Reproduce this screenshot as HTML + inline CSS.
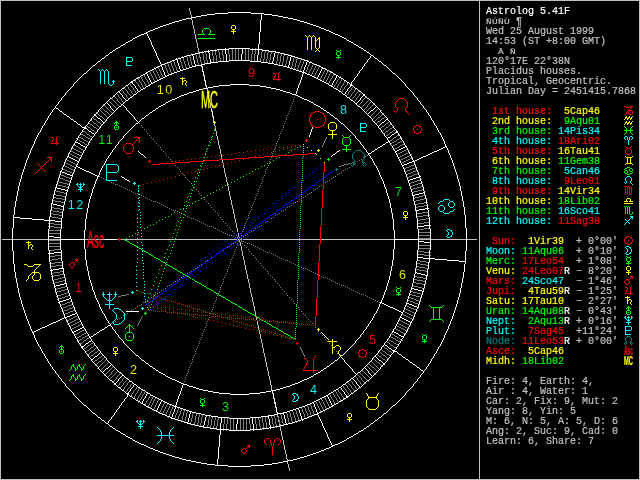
<!DOCTYPE html>
<html><head><meta charset="utf-8"><title>Astrolog 5.41F</title>
<style>
html,body{margin:0;padding:0;background:#000;width:640px;height:480px;overflow:hidden}
svg{display:block;will-change:transform}
.w text{font-family:"Liberation Sans",sans-serif}
.s text{font-family:"Liberation Mono",monospace;font-size:10px;stroke-width:0.2px;paint-order:stroke}
</style></head><body>
<svg width="640" height="480" viewBox="0 0 640 480">
<rect x="0" y="0" width="640" height="480" fill="#000"/>
<rect x="0.5" y="0.5" width="639" height="479" fill="none" stroke="#c0c0c0"/>
<line x1="479.5" y1="0" x2="479.5" y2="480" stroke="#c0c0c0"/>
<g class="w" fill="none" stroke-width="1" stroke-linecap="square">
<path d="M2 239.5h475" stroke="#c0c0c0" stroke-linecap="butt" shape-rendering="crispEdges"/>
<path d="M189.5 8v3M190.5 11v4M191.5 15v5M192.5 20v5M193.5 25v4M194.5 29v5M195.5 34v5M196.5 39v4M197.5 43v5M198.5 48v4M199.5 52v5M200.5 57v5M201.5 62v4M202.5 66v5M203.5 71v4M204.5 75v5M205.5 80v5M206.5 85v4M207.5 89v5M208.5 94v5M209.5 99v4M210.5 103v5M211.5 108v4M212.5 112v5M213.5 117v5M214.5 122v4M215.5 126v5M216.5 131v5M217.5 136v4M218.5 140v5M219.5 145v4M220.5 149v5M221.5 154v5M222.5 159v4M223.5 163v5M224.5 168v5M225.5 173v4M226.5 177v5M227.5 182v4M228.5 186v5M229.5 191v5M230.5 196v4M231.5 200v5M232.5 205v4M233.5 209v5M234.5 214v5M235.5 219v4M236.5 223v5M237.5 228v5M238.5 233v4M239.5 237v5M240.5 242v4M241.5 246v5M242.5 251v5M243.5 256v4M244.5 260v5M245.5 265v5M246.5 270v4M247.5 274v5M248.5 279v4M249.5 283v5M250.5 288v5M251.5 293v4M252.5 297v5M253.5 302v4M254.5 306v5M255.5 311v5M256.5 316v4M257.5 320v5M258.5 325v5M259.5 330v4M260.5 334v5M261.5 339v4M262.5 343v5M263.5 348v5M264.5 353v4M265.5 357v5M266.5 362v5M267.5 367v4M268.5 371v5M269.5 376v4M270.5 380v5M271.5 385v5M272.5 390v4M273.5 394v5M274.5 399v5M275.5 404v4M276.5 408v5M277.5 413v4M278.5 417v5M279.5 422v5M280.5 427v4M281.5 431v5M282.5 436v4M283.5 440v5M284.5 445v5M285.5 450v4M286.5 454v5M287.5 459v5M288.5 464v4M289.5 468v3" stroke="#c0c0c0" stroke-linecap="butt" shape-rendering="crispEdges"/>
<path d="M105 111.5h2M100 116.5h2M378 117.5h2M382 118.5h2M94 119.5h2M378 121.5h2M98 122.5h2M94 123.5h2M386 123.5h2M90 124.5h2M382 126.5h2M88 127.5h2M94 127.5h2M386 127.5h2M390 128.5h2M92 130.5h2M393 130.5h2M83 131.5h2M386 131.5h2M390 132.5h2M81 134.5h2M87 134.5h2M83 135.5h2M386 135.5h2M397 135.5h2M90 136.5h2M79 137.5h2M86 137.5h2M394 137.5h2M81 138.5h2M88 138.5h2M399 138.5h2M77 139.5h2M397 139.5h2M84 140.5h2M390 140.5h2M80 141.5h2M86 141.5h2M394 141.5h2M400 141.5h2M82 142.5h2M392 142.5h2M398 142.5h2M85 144.5h2M395 144.5h2M402 144.5h2M74 145.5h2M393 145.5h2M400 145.5h2M76 146.5h2M397 147.5h2M72 148.5h2M79 148.5h2M395 148.5h2M74 149.5h2M81 149.5h2M406 149.5h2M76 150.5h2M404 150.5h2M71 151.5h2M78 151.5h2M402 151.5h2M73 152.5h2M80 152.5h2M400 152.5h2M408 152.5h2M68 153.5h2M75 153.5h2M398 153.5h2M406 153.5h2M70 154.5h2M77 154.5h2M404 154.5h2M72 155.5h2M79 155.5h2M402 155.5h2M409 155.5h2M74 156.5h2M400 156.5h2M407 156.5h2M76 157.5h2M398 157.5h2M405 157.5h2M78 158.5h2M403 158.5h2M410 158.5h2M65 159.5h2M401 159.5h2M408 159.5h2M67 160.5h2M406 160.5h2M69 161.5h2M404 161.5h2M64 162.5h2M71 162.5h2M402 162.5h2M66 163.5h2M73 163.5h2M68 164.5h2M75 164.5h2M414 164.5h2M63 165.5h2M70 165.5h2M411 165.5h3M65 166.5h2M72 166.5h2M409 166.5h2M67 167.5h2M74 167.5h2M406 167.5h3M415 167.5h2M61 168.5h2M69 168.5h2M404 168.5h2M412 168.5h3M63 169.5h2M71 169.5h2M410 169.5h2M65 170.5h2M73 170.5h2M407 170.5h3M416 170.5h2M67 171.5h3M405 171.5h2M413 171.5h3M70 172.5h2M411 172.5h2M72 173.5h2M408 173.5h3M417 173.5h2M59 174.5h2M406 174.5h2M414 174.5h3M61 175.5h3M412 175.5h2M64 176.5h2M409 176.5h3M58 177.5h2M66 177.5h3M407 177.5h2M60 178.5h3M69 178.5h2M63 179.5h2M420 179.5h2M65 180.5h3M417 180.5h3M57 181.5h2M68 181.5h2M414 181.5h3M59 182.5h4M411 182.5h3M421 182.5h2M63 183.5h4M409 183.5h2M418 183.5h3M56 184.5h2M67 184.5h2M415 184.5h3M58 185.5h4M412 185.5h3M62 186.5h4M410 186.5h2M421 186.5h3M66 187.5h2M417 187.5h4M413 188.5h4M411 189.5h2M422 189.5h2M54 190.5h2M418 190.5h4M56 191.5h4M414 191.5h4M60 192.5h4M412 192.5h2M64 193.5h3M53 194.5h3M56 195.5h6M423 195.5h3M62 196.5h4M419 196.5h4M53 197.5h3M415 197.5h4M56 198.5h6M413 198.5h2M424 198.5h3M62 199.5h3M420 199.5h4M52 200.5h3M416 200.5h4M55 201.5h6M414 201.5h2M61 202.5h4M424 202.5h4M418 203.5h6M415 204.5h3M424 205.5h4M418 206.5h6M51 207.5h3M415 207.5h3M54 208.5h6M60 209.5h3M50 210.5h3M53 211.5h6M59 212.5h4M422 212.5h7M50 213.5h3M416 213.5h6M53 214.5h6M59 215.5h3M423 215.5h7M49 216.5h3M417 216.5h6M52 217.5h6M58 218.5h4M426 218.5h4M420 219.5h6M417 220.5h3M424 222.5h6M48 223.5h6M418 223.5h6M54 224.5h7M48 226.5h6M54 227.5h7M424 228.5h7M418 229.5h6M48 230.5h13M418 232.5h13M48 233.5h13M418 235.5h13M418 238.5h13M48 240.5h13M48 243.5h13M418 245.5h13M48 246.5h13M418 248.5h13M54 249.5h7M48 250.5h6M418 251.5h6M424 252.5h7M418 254.5h6M55 255.5h6M424 255.5h7M49 256.5h6M58 258.5h4M52 259.5h6M49 260.5h3M417 260.5h3M420 261.5h6M55 262.5h7M426 262.5h4M49 263.5h6M417 263.5h3M420 264.5h6M56 265.5h7M426 265.5h3M50 266.5h6M416 266.5h3M419 267.5h6M425 268.5h4M416 269.5h3M419 270.5h6M60 271.5h4M425 271.5h3M54 272.5h6M51 273.5h3M60 274.5h4M54 275.5h6M51 276.5h3M414 276.5h3M62 277.5h3M417 277.5h6M58 278.5h4M423 278.5h4M54 279.5h4M414 279.5h3M52 280.5h2M63 280.5h3M417 280.5h6M59 281.5h4M423 281.5h3M55 282.5h4M413 282.5h3M53 283.5h2M416 283.5h6M422 284.5h4M412 285.5h2M65 286.5h2M414 286.5h4M61 287.5h4M418 287.5h4M57 288.5h4M422 288.5h3M55 289.5h2M65 289.5h3M61 290.5h4M57 291.5h4M411 291.5h2M55 292.5h2M67 292.5h2M413 292.5h4M64 293.5h3M417 293.5h4M61 294.5h3M410 294.5h2M421 294.5h2M58 295.5h3M68 295.5h2M412 295.5h4M56 296.5h2M65 296.5h3M416 296.5h4M62 297.5h3M409 297.5h2M420 297.5h2M59 298.5h3M411 298.5h3M57 299.5h2M414 299.5h2M408 300.5h2M416 300.5h3M70 301.5h2M410 301.5h3M419 301.5h2M67 302.5h3M413 302.5h2M65 303.5h2M415 303.5h3M62 304.5h3M71 304.5h2M418 304.5h2M60 305.5h2M68 305.5h3M405 305.5h2M66 306.5h2M407 306.5h2M63 307.5h3M72 307.5h2M409 307.5h2M61 308.5h2M69 308.5h3M404 308.5h2M411 308.5h3M67 309.5h2M406 309.5h2M414 309.5h2M64 310.5h3M73 310.5h2M408 310.5h2M416 310.5h2M62 311.5h2M70 311.5h3M403 311.5h2M410 311.5h2M68 312.5h2M405 312.5h2M412 312.5h2M65 313.5h3M407 313.5h2M414 313.5h2M63 314.5h2M402 314.5h2M409 314.5h2M404 315.5h2M411 315.5h2M75 316.5h2M406 316.5h2M413 316.5h2M73 317.5h2M408 317.5h2M71 318.5h2M410 318.5h2M69 319.5h2M76 319.5h2M412 319.5h2M67 320.5h2M74 320.5h2M399 320.5h2M72 321.5h2M79 321.5h2M401 321.5h2M70 322.5h2M77 322.5h2M403 322.5h2M68 323.5h2M75 323.5h2M405 323.5h2M73 324.5h2M80 324.5h2M399 324.5h2M407 324.5h2M71 325.5h2M78 325.5h2M401 325.5h2M409 325.5h2M69 326.5h2M76 326.5h2M397 326.5h2M403 326.5h2M74 327.5h2M399 327.5h2M405 327.5h2M72 328.5h2M401 328.5h2M407 328.5h2M396 329.5h2M403 329.5h2M82 330.5h2M398 330.5h2M405 330.5h2M80 331.5h2M401 332.5h2M77 333.5h2M84 333.5h2M403 333.5h2M75 334.5h2M82 334.5h2M392 334.5h2M79 336.5h2M85 336.5h2M395 336.5h2M77 337.5h2M83 337.5h2M391 337.5h2M397 337.5h2M87 338.5h2M393 338.5h2M80 339.5h2M400 339.5h2M78 340.5h2M84 340.5h2M389 340.5h2M396 340.5h2M391 341.5h2M398 341.5h2M387 342.5h2M80 343.5h2M91 343.5h2M394 343.5h2M396 344.5h2M88 345.5h2M391 345.5h2M91 347.5h2M394 347.5h2M84 348.5h2M385 348.5h2M87 350.5h2M91 351.5h2M383 351.5h2M389 351.5h2M95 352.5h2M387 354.5h2M91 355.5h2M383 355.5h2M379 356.5h2M99 357.5h2M383 359.5h2M95 360.5h2M99 361.5h2M377 362.5h2M372 367.5h2M66.5 321v1M67.5 324v1M70.5 150v1M71.5 147v1M71.5 329v1M73.5 144v1M74.5 335v1M76.5 138v1M76.5 338v1M77.5 315v1M77.5 341v1M78.5 136v1M78.5 147v1M78.5 318v1M79.5 140v1M79.5 332v1M79.5 344v1M80.5 133v1M81.5 335v1M82.5 130v1M82.5 153v1M82.5 338v1M82.5 342v1M83.5 139v1M83.5 150v1M83.5 341v1M83.5 349v1M84.5 143v1M84.5 329v1M85.5 132v1M85.5 136v1M85.5 352v1M86.5 125v1M86.5 133v1M86.5 332v1M86.5 339v1M86.5 347v1M86.5 351v1M87.5 126v1M87.5 145v1M87.5 335v1M87.5 346v1M87.5 355v1M88.5 122v1M88.5 142v1M88.5 354v1M89.5 123v1M89.5 135v1M89.5 337v1M89.5 349v1M89.5 353v1M89.5 357v1M90.5 119v1M90.5 128v1M90.5 139v1M90.5 344v1M90.5 348v1M90.5 352v1M90.5 356v1M91.5 120v1M91.5 129v1M92.5 117v1M92.5 121v1M92.5 125v1M92.5 137v1M93.5 118v1M93.5 122v1M93.5 126v1M93.5 342v1M93.5 346v1M93.5 350v1M93.5 354v1M93.5 362v1M94.5 131v1M94.5 345v1M94.5 349v1M94.5 353v1M94.5 361v1M95.5 132v1M95.5 348v1M95.5 365v1M96.5 112v1M96.5 120v1M96.5 124v1M96.5 128v1M96.5 347v1M96.5 364v1M97.5 113v1M97.5 121v1M97.5 125v1M97.5 129v1M97.5 351v1M97.5 359v1M97.5 363v1M97.5 368v1M98.5 114v1M98.5 126v1M98.5 350v1M98.5 358v1M98.5 362v1M98.5 367v1M99.5 109v1M99.5 115v1M99.5 127v1M99.5 366v1M100.5 110v1M100.5 123v1M100.5 365v1M100.5 370v1M101.5 107v1M101.5 111v1M101.5 124v1M101.5 356v1M101.5 360v1M101.5 364v1M101.5 369v1M102.5 108v1M102.5 112v1M102.5 117v1M102.5 355v1M102.5 359v1M102.5 363v1M102.5 368v1M103.5 104v1M103.5 109v1M103.5 113v1M103.5 118v1M103.5 358v1M103.5 362v1M103.5 367v1M104.5 105v1M104.5 110v1M104.5 114v1M104.5 119v1M104.5 357v1M104.5 361v1M104.5 366v1M104.5 375v1M105.5 106v1M105.5 115v1M105.5 120v1M105.5 360v1M105.5 365v1M105.5 374v1M106.5 107v1M106.5 116v1M106.5 359v1M106.5 364v1M106.5 373v1M107.5 108v1M107.5 112v1M107.5 117v1M107.5 363v1M107.5 372v1M107.5 377v1M108.5 100v1M108.5 109v1M108.5 113v1M108.5 362v1M108.5 371v1M108.5 376v1M109.5 101v1M109.5 110v1M109.5 114v1M109.5 370v1M109.5 375v1M109.5 379v1M110.5 97v1M110.5 102v1M110.5 111v1M110.5 115v1M110.5 369v1M110.5 374v1M110.5 378v1M111.5 98v1M111.5 103v1M111.5 112v1M111.5 368v1M111.5 372v2M111.5 377v1M112.5 99v1M112.5 104v1M112.5 113v1M112.5 367v1M112.5 371v1M112.5 376v1M112.5 382v1M113.5 95v1M113.5 100v1M113.5 105v1M113.5 366v1M113.5 370v1M113.5 375v1M113.5 381v1M114.5 96v1M114.5 101v1M114.5 106v1M114.5 369v1M114.5 374v1M114.5 380v1M115.5 97v1M115.5 102v1M115.5 107v1M115.5 368v1M115.5 373v1M115.5 379v1M116.5 93v1M116.5 98v1M116.5 103v1M116.5 108v1M116.5 372v1M116.5 377v2M117.5 94v1M117.5 99v2M117.5 104v1M117.5 371v1M117.5 376v1M117.5 386v1M118.5 95v2M118.5 101v1M118.5 105v1M118.5 375v1M118.5 385v1M119.5 97v1M119.5 102v1M119.5 106v1M119.5 374v1M119.5 383v2M119.5 388v1M120.5 98v1M120.5 103v1M120.5 373v1M120.5 382v1M120.5 387v1M121.5 89v1M121.5 99v2M121.5 104v1M121.5 381v1M121.5 386v1M122.5 90v1M122.5 101v1M122.5 379v2M122.5 385v1M122.5 390v1M123.5 87v1M123.5 91v2M123.5 102v1M123.5 378v1M123.5 383v2M123.5 389v1M124.5 88v1M124.5 93v1M124.5 377v1M124.5 382v1M124.5 387v2M125.5 89v1M125.5 94v1M125.5 381v1M125.5 386v1M125.5 392v1M126.5 85v1M126.5 90v1M126.5 95v2M126.5 380v1M126.5 385v1M126.5 391v1M127.5 86v1M127.5 91v2M127.5 97v1M127.5 379v1M127.5 383v2M127.5 389v2M128.5 87v2M128.5 93v1M128.5 98v1M128.5 382v1M128.5 388v1M129.5 83v1M129.5 89v1M129.5 94v1M129.5 381v1M129.5 387v1M130.5 84v2M130.5 90v1M130.5 95v1M130.5 385v2M130.5 396v1M131.5 86v1M131.5 91v2M131.5 96v1M131.5 384v1M131.5 394v2M132.5 87v1M132.5 93v1M132.5 383v1M132.5 393v1M133.5 88v2M133.5 94v1M133.5 391v2M133.5 398v1M134.5 79v1M134.5 90v1M134.5 390v1M134.5 396v2M135.5 80v2M135.5 91v2M135.5 389v1M135.5 394v2M136.5 82v1M136.5 93v1M136.5 387v2M136.5 393v1M136.5 400v1M137.5 77v1M137.5 83v1M137.5 386v1M137.5 391v2M137.5 398v2M138.5 78v2M138.5 84v2M138.5 389v2M138.5 396v2M138.5 402v1M139.5 80v2M139.5 86v1M139.5 388v1M139.5 395v1M139.5 400v2M140.5 76v1M140.5 82v1M140.5 87v2M140.5 393v2M140.5 399v1M141.5 77v2M141.5 83v2M141.5 89v1M141.5 391v2M141.5 397v2M142.5 79v2M142.5 85v2M142.5 390v1M142.5 395v2M143.5 74v1M143.5 81v1M143.5 87v1M143.5 394v1M144.5 75v2M144.5 82v2M144.5 392v2M144.5 405v1M145.5 77v2M145.5 84v2M145.5 391v1M145.5 403v2M146.5 79v1M146.5 86v1M146.5 401v2M147.5 80v2M147.5 400v1M147.5 407v1M148.5 82v2M148.5 398v2M148.5 405v2M149.5 71v1M149.5 84v1M149.5 396v2M149.5 403v2M150.5 72v2M150.5 395v1M150.5 401v2M150.5 407v2M151.5 74v2M151.5 399v2M151.5 405v2M152.5 69v2M152.5 76v2M152.5 397v2M152.5 403v2M153.5 71v2M153.5 78v2M153.5 396v1M153.5 401v2M153.5 409v2M154.5 67v1M154.5 73v2M154.5 80v2M154.5 399v2M154.5 407v2M155.5 68v2M155.5 75v2M155.5 398v1M155.5 405v2M156.5 70v2M156.5 77v2M156.5 403v2M157.5 66v1M157.5 72v2M157.5 79v2M157.5 401v2M158.5 67v2M158.5 74v2M158.5 399v2M159.5 69v2M159.5 76v2M159.5 412v2M160.5 71v2M160.5 78v1M160.5 410v2M161.5 73v2M161.5 408v2M162.5 75v2M162.5 406v2M162.5 413v2M163.5 77v1M163.5 404v2M163.5 411v2M164.5 63v2M164.5 402v2M164.5 409v2M165.5 65v3M165.5 407v2M165.5 414v2M166.5 68v2M166.5 405v2M166.5 412v2M167.5 62v2M167.5 70v3M167.5 403v2M167.5 410v2M168.5 64v3M168.5 73v2M168.5 408v2M168.5 416v2M169.5 67v2M169.5 406v2M169.5 414v2M170.5 61v2M170.5 69v3M170.5 404v2M170.5 411v3M171.5 63v3M171.5 72v2M171.5 409v2M172.5 66v2M172.5 407v2M173.5 60v2M173.5 68v3M173.5 405v2M174.5 62v3M174.5 71v2M174.5 418v2M175.5 65v2M175.5 415v3M176.5 67v3M176.5 413v2M177.5 70v2M177.5 410v3M177.5 419v2M178.5 408v2M178.5 416v3M179.5 57v2M179.5 414v2M180.5 59v3M180.5 411v3M181.5 62v3M181.5 409v2M181.5 420v2M182.5 56v2M182.5 65v3M182.5 416v4M183.5 58v3M183.5 68v2M183.5 412v4M184.5 61v3M184.5 410v2M184.5 421v2M185.5 64v3M185.5 417v4M186.5 55v2M186.5 67v2M186.5 413v4M187.5 57v4M187.5 411v2M188.5 61v4M189.5 55v2M189.5 65v3M190.5 57v4M190.5 422v3M191.5 61v4M191.5 418v4M192.5 65v2M192.5 414v4M193.5 412v2M194.5 422v4M195.5 53v2M195.5 416v6M196.5 55v4M196.5 413v3M197.5 59v4M197.5 423v3M198.5 52v2M198.5 63v3M198.5 417v6M199.5 54v4M199.5 414v3M200.5 58v4M200.5 423v4M201.5 62v3M201.5 417v6M202.5 51v3M202.5 414v3M203.5 54v6M204.5 60v4M205.5 51v3M206.5 54v6M207.5 60v4M207.5 425v3M208.5 419v6M209.5 416v3M210.5 425v4M211.5 419v6M212.5 50v6M212.5 416v3M213.5 56v7M213.5 426v3M214.5 420v6M215.5 49v6M215.5 417v3M216.5 55v7M216.5 426v4M217.5 420v6M218.5 49v3M218.5 417v3M219.5 52v6M220.5 58v4M222.5 49v6M223.5 55v6M223.5 424v7M224.5 418v6M226.5 424v7M227.5 418v6M228.5 48v6M229.5 54v7M230.5 418v13M232.5 48v13M233.5 418v13M235.5 48v13M238.5 48v13M240.5 418v13M243.5 418v13M245.5 48v13M246.5 418v13M248.5 48v13M249.5 418v6M250.5 424v7M251.5 54v7M252.5 48v6M254.5 54v7M255.5 48v6M255.5 418v6M256.5 424v6M258.5 417v3M259.5 420v6M260.5 58v4M260.5 426v4M261.5 52v6M262.5 49v3M262.5 417v6M263.5 59v3M263.5 423v7M264.5 53v6M265.5 50v3M265.5 416v6M266.5 59v4M266.5 422v7M267.5 53v6M268.5 50v3M269.5 60v3M270.5 54v6M271.5 51v3M271.5 415v3M272.5 418v6M273.5 424v4M274.5 415v3M275.5 418v6M276.5 61v4M276.5 424v4M277.5 55v6M277.5 414v2M278.5 52v3M278.5 416v4M279.5 62v3M279.5 420v4M280.5 56v6M280.5 413v2M280.5 424v3M281.5 53v3M281.5 415v4M282.5 62v4M282.5 419v4M283.5 56v6M283.5 423v3M284.5 53v3M285.5 64v3M286.5 60v4M286.5 412v2M287.5 56v4M287.5 414v4M288.5 54v2M288.5 418v4M289.5 411v2M289.5 422v2M290.5 413v4M291.5 66v2M291.5 417v4M292.5 62v4M292.5 410v2M292.5 421v3M293.5 58v4M293.5 412v3M294.5 56v2M294.5 67v2M294.5 415v3M295.5 63v4M295.5 409v2M295.5 418v3M296.5 59v4M296.5 411v3M296.5 421v2M297.5 57v2M297.5 68v2M297.5 414v3M298.5 65v3M298.5 417v3M299.5 63v2M299.5 420v2M300.5 60v3M300.5 69v2M301.5 58v2M301.5 66v3M301.5 407v2M302.5 64v2M302.5 409v3M303.5 61v3M303.5 412v2M304.5 59v2M304.5 406v2M304.5 414v3M305.5 72v2M305.5 408v3M305.5 417v2M306.5 70v2M306.5 411v2M307.5 67v3M307.5 405v2M307.5 413v3M308.5 65v2M308.5 73v2M308.5 407v3M308.5 416v2M309.5 63v2M309.5 71v2M309.5 410v2M310.5 61v2M310.5 69v2M310.5 404v2M310.5 412v3M311.5 67v2M311.5 74v2M311.5 406v3M311.5 415v2M312.5 65v2M312.5 72v2M312.5 409v2M313.5 63v2M313.5 70v2M313.5 411v3M314.5 68v2M314.5 75v2M314.5 414v2M315.5 66v2M315.5 73v2M315.5 401v1M316.5 64v2M316.5 71v2M316.5 402v2M317.5 69v2M317.5 404v2M318.5 67v2M318.5 400v1M318.5 406v2M319.5 65v2M319.5 401v2M319.5 408v2M320.5 78v2M320.5 403v2M320.5 410v2M321.5 76v2M321.5 398v2M321.5 405v2M321.5 412v1M322.5 74v2M322.5 400v2M322.5 407v2M323.5 72v2M323.5 79v2M323.5 402v2M323.5 409v2M324.5 70v2M324.5 77v2M324.5 397v1M324.5 404v2M324.5 411v1M325.5 68v2M325.5 75v2M325.5 82v1M325.5 398v2M325.5 406v2M326.5 73v2M326.5 80v2M326.5 400v2M326.5 408v2M327.5 71v2M327.5 78v2M327.5 402v2M328.5 70v1M328.5 76v2M328.5 83v1M328.5 404v2M329.5 74v2M329.5 81v2M329.5 394v1M329.5 406v2M330.5 72v2M330.5 79v2M330.5 395v2M331.5 71v1M331.5 78v1M331.5 397v2M332.5 76v2M332.5 392v1M332.5 399v1M333.5 74v2M333.5 87v1M333.5 393v2M333.5 400v2M334.5 73v1M334.5 85v2M334.5 395v2M334.5 402v2M335.5 84v1M335.5 391v1M335.5 397v1M335.5 404v1M336.5 82v2M336.5 88v1M336.5 392v2M336.5 398v2M337.5 80v2M337.5 86v2M337.5 389v1M337.5 394v2M337.5 400v2M338.5 79v1M338.5 84v2M338.5 390v2M338.5 396v1M338.5 402v1M339.5 77v2M339.5 83v1M339.5 90v1M339.5 392v1M339.5 397v2M340.5 76v1M340.5 81v2M340.5 88v2M340.5 393v1M340.5 399v2M341.5 79v2M341.5 86v2M341.5 92v1M341.5 394v2M341.5 401v1M342.5 78v1M342.5 85v1M342.5 90v2M342.5 385v1M342.5 396v1M343.5 83v2M343.5 89v1M343.5 386v2M343.5 397v2M344.5 81v2M344.5 87v2M344.5 388v1M344.5 399v1M345.5 80v1M345.5 86v1M345.5 384v1M345.5 389v1M346.5 85v1M346.5 95v1M346.5 385v1M346.5 390v2M347.5 83v2M347.5 94v1M347.5 382v1M347.5 386v2M347.5 392v1M348.5 82v1M348.5 92v2M348.5 383v1M348.5 388v1M348.5 393v2M349.5 91v1M349.5 97v1M349.5 384v1M349.5 389v1M349.5 395v1M350.5 90v1M350.5 96v1M350.5 380v1M350.5 385v1M350.5 390v2M351.5 88v2M351.5 94v2M351.5 99v1M351.5 381v1M351.5 386v2M351.5 392v1M352.5 87v1M352.5 93v1M352.5 98v1M352.5 382v2M352.5 388v1M352.5 393v1M353.5 86v1M353.5 92v1M353.5 97v1M353.5 384v1M353.5 389v1M354.5 90v2M354.5 96v1M354.5 101v1M354.5 385v1M354.5 390v1M355.5 89v1M355.5 94v2M355.5 100v1M355.5 376v1M355.5 386v2M355.5 391v1M356.5 88v1M356.5 93v1M356.5 98v2M356.5 377v1M356.5 388v1M357.5 92v1M357.5 97v1M357.5 374v1M357.5 378v2M357.5 389v1M358.5 91v1M358.5 96v1M358.5 105v1M358.5 375v1M358.5 380v1M359.5 90v1M359.5 94v2M359.5 104v1M359.5 372v1M359.5 376v1M359.5 381v1M360.5 93v1M360.5 103v1M360.5 373v1M360.5 377v1M360.5 382v2M361.5 92v1M361.5 102v1M361.5 107v1M361.5 374v1M361.5 378v2M361.5 384v1M362.5 100v2M362.5 106v1M362.5 370v1M362.5 375v1M362.5 380v1M362.5 385v1M363.5 99v1M363.5 105v1M363.5 110v1M363.5 371v1M363.5 376v1M363.5 381v1M364.5 98v1M364.5 104v1M364.5 109v1M364.5 372v1M364.5 377v1M364.5 382v1M365.5 97v1M365.5 103v1M365.5 108v1M365.5 112v1M365.5 373v1M365.5 378v1M365.5 383v1M366.5 96v1M366.5 102v1M366.5 107v1M366.5 111v1M366.5 365v1M366.5 374v1M366.5 379v1M367.5 101v1M367.5 105v2M367.5 110v1M367.5 366v1M367.5 375v1M367.5 380v1M368.5 100v1M368.5 104v1M368.5 109v1M368.5 363v1M368.5 367v1M368.5 376v1M368.5 381v1M369.5 99v1M369.5 103v1M369.5 108v1M369.5 364v1M369.5 368v1M369.5 377v1M370.5 102v1M370.5 107v1M370.5 116v1M370.5 365v1M370.5 369v1M370.5 378v1M371.5 101v1M371.5 106v1M371.5 115v1M371.5 361v1M371.5 366v1M371.5 370v1M372.5 105v1M372.5 114v1M372.5 119v1M372.5 362v1M372.5 371v1M373.5 104v1M373.5 113v1M373.5 118v1M373.5 358v1M373.5 363v1M373.5 372v1M374.5 103v1M374.5 112v1M374.5 117v1M374.5 121v1M374.5 359v1M374.5 364v1M374.5 368v1M374.5 373v1M375.5 111v1M375.5 116v1M375.5 120v1M375.5 360v1M375.5 365v1M375.5 369v1M375.5 374v1M376.5 110v1M376.5 115v1M376.5 119v1M376.5 123v1M376.5 361v1M376.5 366v1M376.5 370v1M377.5 109v1M377.5 114v1M377.5 118v1M377.5 122v1M377.5 354v1M377.5 367v1M377.5 371v1M378.5 108v1M378.5 113v1M378.5 355v1M378.5 368v1M379.5 112v1M379.5 351v1M379.5 363v1M379.5 369v1M380.5 111v1M380.5 116v1M380.5 120v1M380.5 128v1M380.5 352v1M380.5 364v1M381.5 110v1M381.5 115v1M381.5 119v1M381.5 127v1M381.5 349v1M381.5 353v1M381.5 357v1M381.5 365v1M382.5 114v1M382.5 131v1M382.5 350v1M382.5 354v1M382.5 358v1M382.5 366v1M383.5 113v1M383.5 130v1M383.5 346v1M384.5 117v1M384.5 125v1M384.5 129v1M384.5 133v1M384.5 347v1M385.5 116v1M385.5 124v1M385.5 128v1M385.5 132v1M385.5 136v1M385.5 352v1M385.5 356v1M385.5 360v1M386.5 341v1M386.5 353v1M386.5 357v1M386.5 361v1M387.5 349v1M387.5 358v1M388.5 122v1M388.5 126v1M388.5 130v1M388.5 134v1M388.5 339v1M388.5 350v1M388.5 359v1M389.5 121v1M389.5 125v1M389.5 129v1M389.5 133v1M389.5 141v1M389.5 343v1M389.5 355v1M390.5 124v1M390.5 336v1M390.5 344v1M390.5 356v1M391.5 123v1M391.5 143v1M391.5 333v1M391.5 352v1M392.5 127v1M392.5 131v1M392.5 139v1M392.5 146v1M392.5 353v1M393.5 126v1M393.5 138v1M393.5 342v1M393.5 346v1M394.5 149v1M394.5 335v1M395.5 129v1M395.5 328v1M395.5 339v1M396.5 136v1M396.5 140v1M396.5 325v1M396.5 348v1M397.5 143v1M397.5 154v1M398.5 323v1M398.5 345v1M399.5 134v1M399.5 146v1M399.5 338v1M400.5 160v1M400.5 331v1M400.5 342v1M401.5 137v1M401.5 163v1M402.5 140v1M402.5 340v1M404.5 143v1M405.5 334v1M407.5 331v1M411.5 154v1M412.5 157v1" stroke="#808080" stroke-linecap="butt" shape-rendering="crispEdges"/>
<path d="M371 110.5h2M98 118.5h2M382 122.5h2M85 128.5h2M89 131.5h2M395 132.5h2M92 133.5h2M392 134.5h2M388 137.5h2M76 142.5h2M78 143.5h2M81 145.5h2M83 146.5h2M405 146.5h2M403 147.5h2M401 148.5h2M399 149.5h2M397 150.5h2M395 151.5h2M67 156.5h2M69 157.5h2M71 158.5h2M73 159.5h2M75 160.5h2M77 161.5h2M412 161.5h2M409 162.5h3M407 163.5h2M404 164.5h3M402 165.5h2M60 171.5h2M62 172.5h3M65 173.5h2M67 174.5h3M70 175.5h2M419 176.5h2M416 177.5h3M413 178.5h3M410 179.5h3M408 180.5h2M55 187.5h2M57 188.5h4M61 189.5h4M65 190.5h2M423 192.5h2M419 193.5h4M415 194.5h4M413 195.5h2M51 203.5h2M53 204.5h4M57 205.5h4M61 206.5h3M425 208.5h4M419 209.5h6M416 210.5h3M49 220.5h6M55 221.5h7M424 225.5h7M418 226.5h6M48 236.5h6M54 237.5h7M418 241.5h6M424 242.5h7M54 252.5h7M48 253.5h6M417 257.5h6M423 258.5h7M59 268.5h4M53 269.5h6M50 270.5h3M415 272.5h2M417 273.5h4M421 274.5h4M425 275.5h3M64 283.5h2M60 284.5h4M56 285.5h4M54 286.5h2M412 288.5h2M414 289.5h4M418 290.5h4M422 291.5h2M69 298.5h2M66 299.5h3M63 300.5h3M60 301.5h3M58 302.5h2M407 303.5h2M409 304.5h3M412 305.5h2M414 306.5h3M417 307.5h2M75 313.5h2M72 314.5h3M70 315.5h2M67 316.5h3M65 317.5h2M400 317.5h2M402 318.5h2M404 319.5h2M406 320.5h2M408 321.5h2M410 322.5h2M82 327.5h2M80 328.5h2M78 329.5h2M76 330.5h2M74 331.5h2M72 332.5h2M394 332.5h2M396 333.5h2M399 335.5h2M401 336.5h2M89 341.5h2M86 343.5h2M385 345.5h2M82 346.5h2M389 348.5h2M392 350.5h2M95 356.5h2M379 360.5h2M106 368.5h2M75.5 141v1M80.5 144v1M81.5 347v1M84.5 127v1M84.5 345v1M85.5 147v1M85.5 344v1M87.5 129v1M88.5 130v1M88.5 342v1M91.5 132v1M91.5 340v1M91.5 360v1M92.5 359v1M93.5 358v1M94.5 114v1M94.5 134v1M94.5 357v1M95.5 115v1M96.5 116v1M97.5 117v1M97.5 355v1M98.5 354v1M99.5 353v1M100.5 119v1M100.5 352v1M101.5 120v1M102.5 121v1M102.5 372v1M103.5 122v1M103.5 371v1M104.5 370v1M105.5 369v1M106.5 102v1M107.5 103v1M108.5 104v1M108.5 367v1M109.5 105v1M109.5 366v1M110.5 106v2M110.5 365v1M111.5 108v1M111.5 364v1M112.5 109v1M113.5 110v1M114.5 111v1M114.5 384v1M115.5 383v1M116.5 382v1M117.5 381v1M118.5 91v1M118.5 379v2M119.5 92v1M119.5 378v1M120.5 93v1M120.5 377v1M121.5 94v1M121.5 376v1M122.5 95v2M122.5 375v1M123.5 97v1M124.5 98v1M125.5 99v1M126.5 100v1M127.5 394v1M128.5 392v2M129.5 391v1M130.5 389v2M131.5 81v1M131.5 388v1M132.5 82v2M132.5 387v1M133.5 84v1M133.5 385v2M134.5 85v1M134.5 384v1M135.5 86v2M136.5 88v1M137.5 89v2M138.5 91v1M141.5 403v1M142.5 401v2M143.5 399v2M144.5 398v1M145.5 396v2M146.5 72v2M146.5 394v2M147.5 74v2M147.5 393v1M148.5 76v2M149.5 78v2M150.5 80v2M151.5 82v2M156.5 410v2M157.5 408v2M158.5 406v2M159.5 404v2M160.5 402v2M161.5 65v2M161.5 400v2M162.5 67v3M163.5 70v2M164.5 72v3M165.5 75v2M171.5 417v2M172.5 414v3M173.5 412v2M174.5 409v3M175.5 407v2M176.5 58v2M177.5 60v3M178.5 63v3M179.5 66v3M180.5 69v2M187.5 422v2M188.5 418v4M189.5 414v4M190.5 412v2M192.5 54v2M193.5 56v4M194.5 60v4M195.5 64v2M203.5 425v3M204.5 421v4M205.5 417v4M206.5 415v2M208.5 50v3M209.5 53v6M210.5 59v4M220.5 423v7M221.5 417v6M225.5 48v6M226.5 54v7M236.5 424v7M237.5 418v6M241.5 54v7M242.5 48v6M252.5 418v6M253.5 424v7M257.5 55v7M258.5 49v6M268.5 416v3M269.5 419v6M270.5 425v4M272.5 61v3M273.5 57v4M274.5 53v4M275.5 51v2M283.5 413v2M284.5 415v4M285.5 419v4M286.5 423v2M288.5 65v2M289.5 61v4M290.5 57v4M291.5 55v2M298.5 408v2M299.5 410v3M300.5 413v3M301.5 416v3M302.5 419v2M303.5 70v2M304.5 67v3M305.5 65v2M306.5 62v3M307.5 60v2M313.5 402v2M314.5 404v3M315.5 407v2M316.5 409v3M317.5 77v2M317.5 412v2M318.5 75v2M319.5 73v2M320.5 71v2M321.5 69v2M322.5 67v2M327.5 395v2M328.5 397v2M329.5 399v2M330.5 401v2M331.5 85v1M331.5 403v2M332.5 83v2M332.5 405v2M333.5 81v2M334.5 80v1M335.5 78v2M336.5 76v2M337.5 75v1M340.5 387v1M341.5 388v2M342.5 390v1M343.5 391v1M344.5 94v1M344.5 392v2M345.5 92v2M345.5 394v1M346.5 91v1M346.5 395v2M347.5 89v2M347.5 397v1M348.5 88v1M349.5 87v1M350.5 85v2M351.5 84v1M352.5 378v1M353.5 379v1M354.5 380v1M355.5 381v1M356.5 103v1M356.5 382v2M357.5 102v1M357.5 384v1M358.5 101v1M358.5 385v1M359.5 100v1M359.5 386v1M360.5 98v2M360.5 387v1M361.5 97v1M362.5 96v1M363.5 95v1M364.5 94v1M364.5 367v1M365.5 368v1M366.5 369v1M367.5 114v1M367.5 370v1M368.5 113v1M368.5 371v2M369.5 112v1M369.5 373v1M370.5 111v1M370.5 374v1M371.5 375v1M372.5 376v1M373.5 109v1M374.5 108v1M375.5 107v1M375.5 356v1M376.5 106v1M376.5 357v1M377.5 358v1M378.5 126v1M378.5 359v1M379.5 125v1M380.5 124v1M381.5 123v1M381.5 361v1M382.5 362v1M383.5 363v1M384.5 121v1M384.5 344v1M384.5 364v1M385.5 120v1M386.5 119v1M387.5 118v1M387.5 138v1M387.5 346v1M388.5 347v1M390.5 136v1M391.5 135v1M391.5 349v1M393.5 331v1M394.5 133v1M394.5 351v1M397.5 131v1M398.5 334v1M403.5 337v1" stroke="#ffffff" stroke-linecap="butt" shape-rendering="crispEdges"/>
<path d="M228 12.5h23M215 13.5h13M251 13.5h13M207 14.5h8M264 14.5h8M201 15.5h6M272 15.5h6M196 16.5h5M278 16.5h5M191 17.5h5M283 17.5h5M186 18.5h5M288 18.5h5M182 19.5h4M293 19.5h4M179 20.5h3M297 20.5h3M175 21.5h4M300 21.5h4M172 22.5h3M304 22.5h3M169 23.5h3M307 23.5h3M166 24.5h3M310 24.5h3M163 25.5h3M313 25.5h3M160 26.5h3M316 26.5h3M158 27.5h2M319 27.5h2M155 28.5h3M321 28.5h3M153 29.5h2M324 29.5h2M150 30.5h3M326 30.5h3M148 31.5h2M329 31.5h2M146 32.5h2M331 32.5h2M144 33.5h2M333 33.5h2M141 34.5h3M335 34.5h3M139 35.5h2M338 35.5h2M137 36.5h2M340 36.5h2M135 37.5h2M342 37.5h2M133 38.5h2M344 38.5h2M130 40.5h2M347 40.5h2M128 41.5h2M349 41.5h2M126 42.5h2M351 42.5h2M123 44.5h2M354 44.5h2M121 45.5h2M356 45.5h2M118 47.5h2M359 47.5h2M116 48.5h2M361 48.5h2M113 50.5h2M364 50.5h2M110 52.5h2M367 52.5h2M106 55.5h2M371 55.5h2M102 58.5h2M375 58.5h2M98 61.5h2M379 61.5h2M93 65.5h2M384 65.5h2M84 73.5h2M393 73.5h2M84 405.5h2M393 405.5h2M93 413.5h2M384 413.5h2M98 417.5h2M379 417.5h2M102 420.5h2M375 420.5h2M106 423.5h2M371 423.5h2M110 426.5h2M367 426.5h2M113 428.5h2M364 428.5h2M116 430.5h2M361 430.5h2M118 431.5h2M359 431.5h2M121 433.5h2M356 433.5h2M123 434.5h2M354 434.5h2M126 436.5h2M351 436.5h2M128 437.5h2M349 437.5h2M130 438.5h2M347 438.5h2M133 440.5h2M344 440.5h2M135 441.5h2M342 441.5h2M137 442.5h2M340 442.5h2M139 443.5h2M338 443.5h2M141 444.5h3M335 444.5h3M144 445.5h2M333 445.5h2M146 446.5h2M331 446.5h2M148 447.5h2M329 447.5h2M150 448.5h3M326 448.5h3M153 449.5h2M324 449.5h2M155 450.5h3M321 450.5h3M158 451.5h2M319 451.5h2M160 452.5h3M316 452.5h3M163 453.5h3M313 453.5h3M166 454.5h3M310 454.5h3M169 455.5h3M307 455.5h3M172 456.5h3M304 456.5h3M175 457.5h4M300 457.5h4M179 458.5h3M297 458.5h3M182 459.5h4M293 459.5h4M186 460.5h5M288 460.5h5M191 461.5h5M283 461.5h5M196 462.5h5M278 462.5h5M201 463.5h6M272 463.5h6M207 464.5h8M264 464.5h8M215 465.5h13M251 465.5h13M228 466.5h23M12.5 228v23M13.5 215v13M13.5 251v13M14.5 207v8M14.5 264v8M15.5 201v6M15.5 272v6M16.5 196v5M16.5 278v5M17.5 191v5M17.5 283v5M18.5 186v5M18.5 288v5M19.5 182v4M19.5 293v4M20.5 179v3M20.5 297v3M21.5 175v4M21.5 300v4M22.5 172v3M22.5 304v3M23.5 169v3M23.5 307v3M24.5 166v3M24.5 310v3M25.5 163v3M25.5 313v3M26.5 160v3M26.5 316v3M27.5 158v2M27.5 319v2M28.5 155v3M28.5 321v3M29.5 153v2M29.5 324v2M30.5 150v3M30.5 326v3M31.5 148v2M31.5 329v2M32.5 146v2M32.5 331v2M33.5 144v2M33.5 333v2M34.5 141v3M34.5 335v3M35.5 139v2M35.5 338v2M36.5 137v2M36.5 340v2M37.5 135v2M37.5 342v2M38.5 133v2M38.5 344v2M39.5 132v1M39.5 346v1M40.5 130v2M40.5 347v2M41.5 128v2M41.5 349v2M42.5 126v2M42.5 351v2M43.5 125v1M43.5 353v1M44.5 123v2M44.5 354v2M45.5 121v2M45.5 356v2M46.5 120v1M46.5 358v1M47.5 118v2M47.5 359v2M48.5 116v2M48.5 361v2M49.5 115v1M49.5 363v1M50.5 113v2M50.5 364v2M51.5 112v1M51.5 366v1M52.5 110v2M52.5 367v2M53.5 109v1M53.5 369v1M54.5 108v1M54.5 370v1M55.5 106v2M55.5 371v2M56.5 105v1M56.5 373v1M57.5 104v1M57.5 374v1M58.5 102v2M58.5 375v2M59.5 101v1M59.5 377v1M60.5 100v1M60.5 378v1M61.5 98v2M61.5 379v2M62.5 97v1M62.5 381v1M63.5 96v1M63.5 382v1M64.5 95v1M64.5 383v1M65.5 93v2M65.5 384v2M66.5 92v1M66.5 386v1M67.5 91v1M67.5 387v1M68.5 90v1M68.5 388v1M69.5 89v1M69.5 389v1M70.5 88v1M70.5 390v1M71.5 87v1M71.5 391v1M72.5 86v1M72.5 392v1M73.5 84v2M73.5 393v2M74.5 83v1M74.5 395v1M75.5 82v1M75.5 396v1M76.5 81v1M76.5 397v1M77.5 80v1M77.5 398v1M78.5 79v1M78.5 399v1M79.5 78v1M79.5 400v1M80.5 77v1M80.5 401v1M81.5 76v1M81.5 402v1M82.5 75v1M82.5 403v1M83.5 74v1M83.5 404v1M86.5 72v1M86.5 406v1M87.5 71v1M87.5 407v1M88.5 70v1M88.5 408v1M89.5 69v1M89.5 409v1M90.5 68v1M90.5 410v1M91.5 67v1M91.5 411v1M92.5 66v1M92.5 412v1M95.5 64v1M95.5 414v1M96.5 63v1M96.5 415v1M97.5 62v1M97.5 416v1M100.5 60v1M100.5 418v1M101.5 59v1M101.5 419v1M104.5 57v1M104.5 421v1M105.5 56v1M105.5 422v1M108.5 54v1M108.5 424v1M109.5 53v1M109.5 425v1M112.5 51v1M112.5 427v1M115.5 49v1M115.5 429v1M120.5 46v1M120.5 432v1M125.5 43v1M125.5 435v1M132.5 39v1M132.5 439v1M346.5 39v1M346.5 439v1M353.5 43v1M353.5 435v1M358.5 46v1M358.5 432v1M363.5 49v1M363.5 429v1M366.5 51v1M366.5 427v1M369.5 53v1M369.5 425v1M370.5 54v1M370.5 424v1M373.5 56v1M373.5 422v1M374.5 57v1M374.5 421v1M377.5 59v1M377.5 419v1M378.5 60v1M378.5 418v1M381.5 62v1M381.5 416v1M382.5 63v1M382.5 415v1M383.5 64v1M383.5 414v1M386.5 66v1M386.5 412v1M387.5 67v1M387.5 411v1M388.5 68v1M388.5 410v1M389.5 69v1M389.5 409v1M390.5 70v1M390.5 408v1M391.5 71v1M391.5 407v1M392.5 72v1M392.5 406v1M395.5 74v1M395.5 404v1M396.5 75v1M396.5 403v1M397.5 76v1M397.5 402v1M398.5 77v1M398.5 401v1M399.5 78v1M399.5 400v1M400.5 79v1M400.5 399v1M401.5 80v1M401.5 398v1M402.5 81v1M402.5 397v1M403.5 82v1M403.5 396v1M404.5 83v1M404.5 395v1M405.5 84v2M405.5 393v2M406.5 86v1M406.5 392v1M407.5 87v1M407.5 391v1M408.5 88v1M408.5 390v1M409.5 89v1M409.5 389v1M410.5 90v1M410.5 388v1M411.5 91v1M411.5 387v1M412.5 92v1M412.5 386v1M413.5 93v2M413.5 384v2M414.5 95v1M414.5 383v1M415.5 96v1M415.5 382v1M416.5 97v1M416.5 381v1M417.5 98v2M417.5 379v2M418.5 100v1M418.5 378v1M419.5 101v1M419.5 377v1M420.5 102v2M420.5 375v2M421.5 104v1M421.5 374v1M422.5 105v1M422.5 373v1M423.5 106v2M423.5 371v2M424.5 108v1M424.5 370v1M425.5 109v1M425.5 369v1M426.5 110v2M426.5 367v2M427.5 112v1M427.5 366v1M428.5 113v2M428.5 364v2M429.5 115v1M429.5 363v1M430.5 116v2M430.5 361v2M431.5 118v2M431.5 359v2M432.5 120v1M432.5 358v1M433.5 121v2M433.5 356v2M434.5 123v2M434.5 354v2M435.5 125v1M435.5 353v1M436.5 126v2M436.5 351v2M437.5 128v2M437.5 349v2M438.5 130v2M438.5 347v2M439.5 132v1M439.5 346v1M440.5 133v2M440.5 344v2M441.5 135v2M441.5 342v2M442.5 137v2M442.5 340v2M443.5 139v2M443.5 338v2M444.5 141v3M444.5 335v3M445.5 144v2M445.5 333v2M446.5 146v2M446.5 331v2M447.5 148v2M447.5 329v2M448.5 150v3M448.5 326v3M449.5 153v2M449.5 324v2M450.5 155v3M450.5 321v3M451.5 158v2M451.5 319v2M452.5 160v3M452.5 316v3M453.5 163v3M453.5 313v3M454.5 166v3M454.5 310v3M455.5 169v3M455.5 307v3M456.5 172v3M456.5 304v3M457.5 175v4M457.5 300v4M458.5 179v3M458.5 297v3M459.5 182v4M459.5 293v4M460.5 186v5M460.5 288v5M461.5 191v5M461.5 283v5M462.5 196v5M462.5 278v5M463.5 201v6M463.5 272v6M464.5 207v8M464.5 264v8M465.5 215v13M465.5 251v13M466.5 228v23" stroke="#ffffff" stroke-linecap="butt" shape-rendering="crispEdges"/>
<path d="M229 48.5h21M217 49.5h12M250 49.5h12M210 50.5h7M262 50.5h7M204 51.5h6M269 51.5h6M199 52.5h5M275 52.5h5M195 53.5h4M280 53.5h4M191 54.5h4M284 54.5h4M187 55.5h4M288 55.5h4M184 56.5h3M292 56.5h3M181 57.5h3M295 57.5h3M178 58.5h3M298 58.5h3M175 59.5h3M301 59.5h3M172 60.5h3M304 60.5h3M170 61.5h2M307 61.5h2M167 62.5h3M309 62.5h3M165 63.5h2M312 63.5h2M162 64.5h3M314 64.5h3M160 65.5h2M317 65.5h2M158 66.5h2M319 66.5h2M156 67.5h2M321 67.5h2M154 68.5h2M323 68.5h2M152 69.5h2M325 69.5h2M150 70.5h2M327 70.5h2M148 71.5h2M329 71.5h2M146 72.5h2M331 72.5h2M143 74.5h2M334 74.5h2M141 75.5h2M336 75.5h2M138 77.5h2M339 77.5h2M136 78.5h2M341 78.5h2M133 80.5h2M344 80.5h2M130 82.5h2M347 82.5h2M126 85.5h2M351 85.5h2M122 88.5h2M355 88.5h2M118 91.5h2M359 91.5h2M110 98.5h2M367 98.5h2M110 380.5h2M367 380.5h2M118 387.5h2M359 387.5h2M122 390.5h2M355 390.5h2M126 393.5h2M351 393.5h2M130 396.5h2M347 396.5h2M133 398.5h2M344 398.5h2M136 400.5h2M341 400.5h2M138 401.5h2M339 401.5h2M141 403.5h2M336 403.5h2M143 404.5h2M334 404.5h2M146 406.5h2M331 406.5h2M148 407.5h2M329 407.5h2M150 408.5h2M327 408.5h2M152 409.5h2M325 409.5h2M154 410.5h2M323 410.5h2M156 411.5h2M321 411.5h2M158 412.5h2M319 412.5h2M160 413.5h2M317 413.5h2M162 414.5h3M314 414.5h3M165 415.5h2M312 415.5h2M167 416.5h3M309 416.5h3M170 417.5h2M307 417.5h2M172 418.5h3M304 418.5h3M175 419.5h3M301 419.5h3M178 420.5h3M298 420.5h3M181 421.5h3M295 421.5h3M184 422.5h3M292 422.5h3M187 423.5h4M288 423.5h4M191 424.5h4M284 424.5h4M195 425.5h4M280 425.5h4M199 426.5h5M275 426.5h5M204 427.5h6M269 427.5h6M210 428.5h7M262 428.5h7M217 429.5h12M250 429.5h12M229 430.5h21M48.5 229v21M49.5 217v12M49.5 250v12M50.5 210v7M50.5 262v7M51.5 204v6M51.5 269v6M52.5 199v5M52.5 275v5M53.5 195v4M53.5 280v4M54.5 191v4M54.5 284v4M55.5 187v4M55.5 288v4M56.5 184v3M56.5 292v3M57.5 181v3M57.5 295v3M58.5 178v3M58.5 298v3M59.5 175v3M59.5 301v3M60.5 172v3M60.5 304v3M61.5 170v2M61.5 307v2M62.5 167v3M62.5 309v3M63.5 165v2M63.5 312v2M64.5 162v3M64.5 314v3M65.5 160v2M65.5 317v2M66.5 158v2M66.5 319v2M67.5 156v2M67.5 321v2M68.5 154v2M68.5 323v2M69.5 152v2M69.5 325v2M70.5 150v2M70.5 327v2M71.5 148v2M71.5 329v2M72.5 146v2M72.5 331v2M73.5 145v1M73.5 333v1M74.5 143v2M74.5 334v2M75.5 141v2M75.5 336v2M76.5 140v1M76.5 338v1M77.5 138v2M77.5 339v2M78.5 136v2M78.5 341v2M79.5 135v1M79.5 343v1M80.5 133v2M80.5 344v2M81.5 132v1M81.5 346v1M82.5 130v2M82.5 347v2M83.5 129v1M83.5 349v1M84.5 128v1M84.5 350v1M85.5 126v2M85.5 351v2M86.5 125v1M86.5 353v1M87.5 124v1M87.5 354v1M88.5 122v2M88.5 355v2M89.5 121v1M89.5 357v1M90.5 120v1M90.5 358v1M91.5 118v2M91.5 359v2M92.5 117v1M92.5 361v1M93.5 116v1M93.5 362v1M94.5 115v1M94.5 363v1M95.5 114v1M95.5 364v1M96.5 113v1M96.5 365v1M97.5 112v1M97.5 366v1M98.5 110v2M98.5 367v2M99.5 109v1M99.5 369v1M100.5 108v1M100.5 370v1M101.5 107v1M101.5 371v1M102.5 106v1M102.5 372v1M103.5 105v1M103.5 373v1M104.5 104v1M104.5 374v1M105.5 103v1M105.5 375v1M106.5 102v1M106.5 376v1M107.5 101v1M107.5 377v1M108.5 100v1M108.5 378v1M109.5 99v1M109.5 379v1M112.5 97v1M112.5 381v1M113.5 96v1M113.5 382v1M114.5 95v1M114.5 383v1M115.5 94v1M115.5 384v1M116.5 93v1M116.5 385v1M117.5 92v1M117.5 386v1M120.5 90v1M120.5 388v1M121.5 89v1M121.5 389v1M124.5 87v1M124.5 391v1M125.5 86v1M125.5 392v1M128.5 84v1M128.5 394v1M129.5 83v1M129.5 395v1M132.5 81v1M132.5 397v1M135.5 79v1M135.5 399v1M140.5 76v1M140.5 402v1M145.5 73v1M145.5 405v1M333.5 73v1M333.5 405v1M338.5 76v1M338.5 402v1M343.5 79v1M343.5 399v1M346.5 81v1M346.5 397v1M349.5 83v1M349.5 395v1M350.5 84v1M350.5 394v1M353.5 86v1M353.5 392v1M354.5 87v1M354.5 391v1M357.5 89v1M357.5 389v1M358.5 90v1M358.5 388v1M361.5 92v1M361.5 386v1M362.5 93v1M362.5 385v1M363.5 94v1M363.5 384v1M364.5 95v1M364.5 383v1M365.5 96v1M365.5 382v1M366.5 97v1M366.5 381v1M369.5 99v1M369.5 379v1M370.5 100v1M370.5 378v1M371.5 101v1M371.5 377v1M372.5 102v1M372.5 376v1M373.5 103v1M373.5 375v1M374.5 104v1M374.5 374v1M375.5 105v1M375.5 373v1M376.5 106v1M376.5 372v1M377.5 107v1M377.5 371v1M378.5 108v1M378.5 370v1M379.5 109v1M379.5 369v1M380.5 110v2M380.5 367v2M381.5 112v1M381.5 366v1M382.5 113v1M382.5 365v1M383.5 114v1M383.5 364v1M384.5 115v1M384.5 363v1M385.5 116v1M385.5 362v1M386.5 117v1M386.5 361v1M387.5 118v2M387.5 359v2M388.5 120v1M388.5 358v1M389.5 121v1M389.5 357v1M390.5 122v2M390.5 355v2M391.5 124v1M391.5 354v1M392.5 125v1M392.5 353v1M393.5 126v2M393.5 351v2M394.5 128v1M394.5 350v1M395.5 129v1M395.5 349v1M396.5 130v2M396.5 347v2M397.5 132v1M397.5 346v1M398.5 133v2M398.5 344v2M399.5 135v1M399.5 343v1M400.5 136v2M400.5 341v2M401.5 138v2M401.5 339v2M402.5 140v1M402.5 338v1M403.5 141v2M403.5 336v2M404.5 143v2M404.5 334v2M405.5 145v1M405.5 333v1M406.5 146v2M406.5 331v2M407.5 148v2M407.5 329v2M408.5 150v2M408.5 327v2M409.5 152v2M409.5 325v2M410.5 154v2M410.5 323v2M411.5 156v2M411.5 321v2M412.5 158v2M412.5 319v2M413.5 160v2M413.5 317v2M414.5 162v3M414.5 314v3M415.5 165v2M415.5 312v2M416.5 167v3M416.5 309v3M417.5 170v2M417.5 307v2M418.5 172v3M418.5 304v3M419.5 175v3M419.5 301v3M420.5 178v3M420.5 298v3M421.5 181v3M421.5 295v3M422.5 184v3M422.5 292v3M423.5 187v4M423.5 288v4M424.5 191v4M424.5 284v4M425.5 195v4M425.5 280v4M426.5 199v5M426.5 275v5M427.5 204v6M427.5 269v6M428.5 210v7M428.5 262v7M429.5 217v12M429.5 250v12M430.5 229v21" stroke="#ffffff" stroke-linecap="butt" shape-rendering="crispEdges"/>
<path d="M229 60.5h21M218 61.5h11M250 61.5h11M211 62.5h7M261 62.5h7M205 63.5h6M268 63.5h6M201 64.5h4M274 64.5h4M196 65.5h5M278 65.5h5M192 66.5h4M283 66.5h4M189 67.5h3M287 67.5h3M186 68.5h3M290 68.5h3M183 69.5h3M293 69.5h3M180 70.5h3M296 70.5h3M177 71.5h3M299 71.5h3M174 72.5h3M302 72.5h3M172 73.5h2M305 73.5h2M169 74.5h3M307 74.5h3M167 75.5h2M310 75.5h2M165 76.5h2M312 76.5h2M163 77.5h2M314 77.5h2M161 78.5h2M316 78.5h2M159 79.5h2M318 79.5h2M157 80.5h2M320 80.5h2M155 81.5h2M322 81.5h2M153 82.5h2M324 82.5h2M151 83.5h2M326 83.5h2M148 85.5h2M329 85.5h2M146 86.5h2M331 86.5h2M143 88.5h2M334 88.5h2M141 89.5h2M336 89.5h2M138 91.5h2M339 91.5h2M134 94.5h2M343 94.5h2M130 97.5h2M347 97.5h2M126 100.5h2M351 100.5h2M119 106.5h2M358 106.5h2M119 372.5h2M358 372.5h2M126 378.5h2M351 378.5h2M130 381.5h2M347 381.5h2M134 384.5h2M343 384.5h2M138 387.5h2M339 387.5h2M141 389.5h2M336 389.5h2M143 390.5h2M334 390.5h2M146 392.5h2M331 392.5h2M148 393.5h2M329 393.5h2M151 395.5h2M326 395.5h2M153 396.5h2M324 396.5h2M155 397.5h2M322 397.5h2M157 398.5h2M320 398.5h2M159 399.5h2M318 399.5h2M161 400.5h2M316 400.5h2M163 401.5h2M314 401.5h2M165 402.5h2M312 402.5h2M167 403.5h2M310 403.5h2M169 404.5h3M307 404.5h3M172 405.5h2M305 405.5h2M174 406.5h3M302 406.5h3M177 407.5h3M299 407.5h3M180 408.5h3M296 408.5h3M183 409.5h3M293 409.5h3M186 410.5h3M290 410.5h3M189 411.5h3M287 411.5h3M192 412.5h4M283 412.5h4M196 413.5h5M278 413.5h5M201 414.5h4M274 414.5h4M205 415.5h6M268 415.5h6M211 416.5h7M261 416.5h7M218 417.5h11M250 417.5h11M229 418.5h21M60.5 229v21M61.5 218v11M61.5 250v11M62.5 211v7M62.5 261v7M63.5 205v6M63.5 268v6M64.5 201v4M64.5 274v4M65.5 196v5M65.5 278v5M66.5 192v4M66.5 283v4M67.5 189v3M67.5 287v3M68.5 186v3M68.5 290v3M69.5 183v3M69.5 293v3M70.5 180v3M70.5 296v3M71.5 177v3M71.5 299v3M72.5 174v3M72.5 302v3M73.5 172v2M73.5 305v2M74.5 169v3M74.5 307v3M75.5 167v2M75.5 310v2M76.5 165v2M76.5 312v2M77.5 163v2M77.5 314v2M78.5 161v2M78.5 316v2M79.5 159v2M79.5 318v2M80.5 157v2M80.5 320v2M81.5 155v2M81.5 322v2M82.5 153v2M82.5 324v2M83.5 151v2M83.5 326v2M84.5 150v1M84.5 328v1M85.5 148v2M85.5 329v2M86.5 146v2M86.5 331v2M87.5 145v1M87.5 333v1M88.5 143v2M88.5 334v2M89.5 141v2M89.5 336v2M90.5 140v1M90.5 338v1M91.5 138v2M91.5 339v2M92.5 137v1M92.5 341v1M93.5 136v1M93.5 342v1M94.5 134v2M94.5 343v2M95.5 133v1M95.5 345v1M96.5 132v1M96.5 346v1M97.5 130v2M97.5 347v2M98.5 129v1M98.5 349v1M99.5 128v1M99.5 350v1M100.5 126v2M100.5 351v2M101.5 125v1M101.5 353v1M102.5 124v1M102.5 354v1M103.5 123v1M103.5 355v1M104.5 122v1M104.5 356v1M105.5 121v1M105.5 357v1M106.5 119v2M106.5 358v2M107.5 118v1M107.5 360v1M108.5 117v1M108.5 361v1M109.5 116v1M109.5 362v1M110.5 115v1M110.5 363v1M111.5 114v1M111.5 364v1M112.5 113v1M112.5 365v1M113.5 112v1M113.5 366v1M114.5 111v1M114.5 367v1M115.5 110v1M115.5 368v1M116.5 109v1M116.5 369v1M117.5 108v1M117.5 370v1M118.5 107v1M118.5 371v1M121.5 105v1M121.5 373v1M122.5 104v1M122.5 374v1M123.5 103v1M123.5 375v1M124.5 102v1M124.5 376v1M125.5 101v1M125.5 377v1M128.5 99v1M128.5 379v1M129.5 98v1M129.5 380v1M132.5 96v1M132.5 382v1M133.5 95v1M133.5 383v1M136.5 93v1M136.5 385v1M137.5 92v1M137.5 386v1M140.5 90v1M140.5 388v1M145.5 87v1M145.5 391v1M150.5 84v1M150.5 394v1M328.5 84v1M328.5 394v1M333.5 87v1M333.5 391v1M338.5 90v1M338.5 388v1M341.5 92v1M341.5 386v1M342.5 93v1M342.5 385v1M345.5 95v1M345.5 383v1M346.5 96v1M346.5 382v1M349.5 98v1M349.5 380v1M350.5 99v1M350.5 379v1M353.5 101v1M353.5 377v1M354.5 102v1M354.5 376v1M355.5 103v1M355.5 375v1M356.5 104v1M356.5 374v1M357.5 105v1M357.5 373v1M360.5 107v1M360.5 371v1M361.5 108v1M361.5 370v1M362.5 109v1M362.5 369v1M363.5 110v1M363.5 368v1M364.5 111v1M364.5 367v1M365.5 112v1M365.5 366v1M366.5 113v1M366.5 365v1M367.5 114v1M367.5 364v1M368.5 115v1M368.5 363v1M369.5 116v1M369.5 362v1M370.5 117v1M370.5 361v1M371.5 118v1M371.5 360v1M372.5 119v2M372.5 358v2M373.5 121v1M373.5 357v1M374.5 122v1M374.5 356v1M375.5 123v1M375.5 355v1M376.5 124v1M376.5 354v1M377.5 125v1M377.5 353v1M378.5 126v2M378.5 351v2M379.5 128v1M379.5 350v1M380.5 129v1M380.5 349v1M381.5 130v2M381.5 347v2M382.5 132v1M382.5 346v1M383.5 133v1M383.5 345v1M384.5 134v2M384.5 343v2M385.5 136v1M385.5 342v1M386.5 137v1M386.5 341v1M387.5 138v2M387.5 339v2M388.5 140v1M388.5 338v1M389.5 141v2M389.5 336v2M390.5 143v2M390.5 334v2M391.5 145v1M391.5 333v1M392.5 146v2M392.5 331v2M393.5 148v2M393.5 329v2M394.5 150v1M394.5 328v1M395.5 151v2M395.5 326v2M396.5 153v2M396.5 324v2M397.5 155v2M397.5 322v2M398.5 157v2M398.5 320v2M399.5 159v2M399.5 318v2M400.5 161v2M400.5 316v2M401.5 163v2M401.5 314v2M402.5 165v2M402.5 312v2M403.5 167v2M403.5 310v2M404.5 169v3M404.5 307v3M405.5 172v2M405.5 305v2M406.5 174v3M406.5 302v3M407.5 177v3M407.5 299v3M408.5 180v3M408.5 296v3M409.5 183v3M409.5 293v3M410.5 186v3M410.5 290v3M411.5 189v3M411.5 287v3M412.5 192v4M412.5 283v4M413.5 196v5M413.5 278v5M414.5 201v4M414.5 274v4M415.5 205v6M415.5 268v6M416.5 211v7M416.5 261v7M417.5 218v11M417.5 250v11M418.5 229v21" stroke="#ffffff" stroke-linecap="butt" shape-rendering="crispEdges"/>
<path d="M230 84.5h19M219 85.5h11M249 85.5h11M213 86.5h6M260 86.5h6M208 87.5h5M266 87.5h5M203 88.5h5M271 88.5h5M199 89.5h4M276 89.5h4M196 90.5h3M280 90.5h3M193 91.5h3M283 91.5h3M189 92.5h4M286 92.5h4M187 93.5h2M290 93.5h2M184 94.5h3M292 94.5h3M181 95.5h3M295 95.5h3M179 96.5h2M298 96.5h2M177 97.5h2M300 97.5h2M175 98.5h2M302 98.5h2M172 99.5h3M304 99.5h3M170 100.5h2M307 100.5h2M168 101.5h2M309 101.5h2M166 102.5h2M311 102.5h2M163 104.5h2M314 104.5h2M161 105.5h2M316 105.5h2M159 106.5h2M318 106.5h2M156 108.5h2M321 108.5h2M153 110.5h2M324 110.5h2M150 112.5h2M327 112.5h2M146 115.5h2M331 115.5h2M142 118.5h2M335 118.5h2M136 123.5h2M341 123.5h2M136 355.5h2M341 355.5h2M142 360.5h2M335 360.5h2M146 363.5h2M331 363.5h2M150 366.5h2M327 366.5h2M153 368.5h2M324 368.5h2M156 370.5h2M321 370.5h2M159 372.5h2M318 372.5h2M161 373.5h2M316 373.5h2M163 374.5h2M314 374.5h2M166 376.5h2M311 376.5h2M168 377.5h2M309 377.5h2M170 378.5h2M307 378.5h2M172 379.5h3M304 379.5h3M175 380.5h2M302 380.5h2M177 381.5h2M300 381.5h2M179 382.5h2M298 382.5h2M181 383.5h3M295 383.5h3M184 384.5h3M292 384.5h3M187 385.5h2M290 385.5h2M189 386.5h4M286 386.5h4M193 387.5h3M283 387.5h3M196 388.5h3M280 388.5h3M199 389.5h4M276 389.5h4M203 390.5h5M271 390.5h5M208 391.5h5M266 391.5h5M213 392.5h6M260 392.5h6M219 393.5h11M249 393.5h11M230 394.5h19M84.5 230v19M85.5 219v11M85.5 249v11M86.5 213v6M86.5 260v6M87.5 208v5M87.5 266v5M88.5 203v5M88.5 271v5M89.5 199v4M89.5 276v4M90.5 196v3M90.5 280v3M91.5 193v3M91.5 283v3M92.5 189v4M92.5 286v4M93.5 187v2M93.5 290v2M94.5 184v3M94.5 292v3M95.5 181v3M95.5 295v3M96.5 179v2M96.5 298v2M97.5 177v2M97.5 300v2M98.5 175v2M98.5 302v2M99.5 172v3M99.5 304v3M100.5 170v2M100.5 307v2M101.5 168v2M101.5 309v2M102.5 166v2M102.5 311v2M103.5 165v1M103.5 313v1M104.5 163v2M104.5 314v2M105.5 161v2M105.5 316v2M106.5 159v2M106.5 318v2M107.5 158v1M107.5 320v1M108.5 156v2M108.5 321v2M109.5 155v1M109.5 323v1M110.5 153v2M110.5 324v2M111.5 152v1M111.5 326v1M112.5 150v2M112.5 327v2M113.5 149v1M113.5 329v1M114.5 148v1M114.5 330v1M115.5 146v2M115.5 331v2M116.5 145v1M116.5 333v1M117.5 144v1M117.5 334v1M118.5 142v2M118.5 335v2M119.5 141v1M119.5 337v1M120.5 140v1M120.5 338v1M121.5 139v1M121.5 339v1M122.5 138v1M122.5 340v1M123.5 136v2M123.5 341v2M124.5 135v1M124.5 343v1M125.5 134v1M125.5 344v1M126.5 133v1M126.5 345v1M127.5 132v1M127.5 346v1M128.5 131v1M128.5 347v1M129.5 130v1M129.5 348v1M130.5 129v1M130.5 349v1M131.5 128v1M131.5 350v1M132.5 127v1M132.5 351v1M133.5 126v1M133.5 352v1M134.5 125v1M134.5 353v1M135.5 124v1M135.5 354v1M138.5 122v1M138.5 356v1M139.5 121v1M139.5 357v1M140.5 120v1M140.5 358v1M141.5 119v1M141.5 359v1M144.5 117v1M144.5 361v1M145.5 116v1M145.5 362v1M148.5 114v1M148.5 364v1M149.5 113v1M149.5 365v1M152.5 111v1M152.5 367v1M155.5 109v1M155.5 369v1M158.5 107v1M158.5 371v1M165.5 103v1M165.5 375v1M313.5 103v1M313.5 375v1M320.5 107v1M320.5 371v1M323.5 109v1M323.5 369v1M326.5 111v1M326.5 367v1M329.5 113v1M329.5 365v1M330.5 114v1M330.5 364v1M333.5 116v1M333.5 362v1M334.5 117v1M334.5 361v1M337.5 119v1M337.5 359v1M338.5 120v1M338.5 358v1M339.5 121v1M339.5 357v1M340.5 122v1M340.5 356v1M343.5 124v1M343.5 354v1M344.5 125v1M344.5 353v1M345.5 126v1M345.5 352v1M346.5 127v1M346.5 351v1M347.5 128v1M347.5 350v1M348.5 129v1M348.5 349v1M349.5 130v1M349.5 348v1M350.5 131v1M350.5 347v1M351.5 132v1M351.5 346v1M352.5 133v1M352.5 345v1M353.5 134v1M353.5 344v1M354.5 135v1M354.5 343v1M355.5 136v2M355.5 341v2M356.5 138v1M356.5 340v1M357.5 139v1M357.5 339v1M358.5 140v1M358.5 338v1M359.5 141v1M359.5 337v1M360.5 142v2M360.5 335v2M361.5 144v1M361.5 334v1M362.5 145v1M362.5 333v1M363.5 146v2M363.5 331v2M364.5 148v1M364.5 330v1M365.5 149v1M365.5 329v1M366.5 150v2M366.5 327v2M367.5 152v1M367.5 326v1M368.5 153v2M368.5 324v2M369.5 155v1M369.5 323v1M370.5 156v2M370.5 321v2M371.5 158v1M371.5 320v1M372.5 159v2M372.5 318v2M373.5 161v2M373.5 316v2M374.5 163v2M374.5 314v2M375.5 165v1M375.5 313v1M376.5 166v2M376.5 311v2M377.5 168v2M377.5 309v2M378.5 170v2M378.5 307v2M379.5 172v3M379.5 304v3M380.5 175v2M380.5 302v2M381.5 177v2M381.5 300v2M382.5 179v2M382.5 298v2M383.5 181v3M383.5 295v3M384.5 184v3M384.5 292v3M385.5 187v2M385.5 290v2M386.5 189v4M386.5 286v4M387.5 193v3M387.5 283v3M388.5 196v3M388.5 280v3M389.5 199v4M389.5 276v4M390.5 203v5M390.5 271v5M391.5 208v5M391.5 266v5M392.5 213v6M392.5 260v6M393.5 219v11M393.5 249v11M394.5 230v19" stroke="#ffffff" stroke-linecap="butt" shape-rendering="crispEdges"/>
<path d="M217.5 459v6M218.5 447v12M219.5 435v12M220.5 429v6" stroke="#ffffff" stroke-linecap="butt" shape-rendering="crispEdges"/>
<path d="M60 239.5h25" stroke="#ffffff" stroke-linecap="butt" shape-rendering="crispEdges"/>
<path d="M266 438.5h3M276 438.5h3M264.5 440v3M265.5 439v1M265.5 443v1M266.5 444v1M269.5 439v1M270.5 440v3M271.5 443v3M272.5 446v9M273.5 443v3M274.5 440v3M275.5 439v1M278.5 444v1M279.5 439v1M279.5 443v1M280.5 440v3" stroke="#ff0000" fill="none" stroke-linecap="butt" shape-rendering="crispEdges"/>
<path d="M247 445.5h3M248 446.5h2M243 448.5h2M243 453.5h2M241.5 450v2M242.5 449v1M242.5 452v1M245.5 449v1M245.5 452v1M246.5 448v1M246.5 450v2M247.5 447v1M249.5 447v1" stroke="#ff0000" fill="none" stroke-linecap="butt" shape-rendering="crispEdges"/>
<path d="M75 259.5h3M76 260.5h2M71 262.5h2M71 267.5h2M69.5 264v2M70.5 263v1M70.5 266v1M73.5 263v1M73.5 266v1M74.5 262v1M74.5 264v2M75.5 261v1M77.5 261v1" stroke="#ff0000" fill="none" stroke-linecap="butt" shape-rendering="crispEdges"/>
<path d="M317.5 413v2M318.5 415v2M319.5 417v2M320.5 419v2M321.5 421v2M322.5 423v3M323.5 426v2M324.5 428v2M325.5 430v2M326.5 432v2M327.5 434v3M328.5 437v2M329.5 439v2M330.5 441v2M331.5 443v2M332.5 445v2" stroke="#ffffff" stroke-linecap="butt" shape-rendering="crispEdges"/>
<path d="M108 325.5h2M105 327.5h2M102 329.5h2M100 330.5h2M97 332.5h2M94 334.5h2M91 336.5h2M90.5 337v1M93.5 335v1M96.5 333v1M99.5 331v1M104.5 328v1M107.5 326v1M110.5 324v1" stroke="#ffffff" stroke-linecap="butt" shape-rendering="crispEdges"/>
<path d="M239 239.5h1M237 240.5h1M235 242.5h1M233 243.5h1M231 244.5h1M229 246.5h1M227 247.5h1M225 248.5h1M223 250.5h1M221 251.5h1M219 252.5h1M217 253.5h1M215 255.5h1M213 256.5h1M211 257.5h1M209 259.5h1M207 260.5h1M205 261.5h1M203 263.5h1M201 264.5h1M199 265.5h1M197 267.5h1M195 268.5h1M193 269.5h1M191 271.5h1M189 272.5h1M187 273.5h1M185 275.5h1M183 276.5h1M181 277.5h1M179 279.5h1M177 280.5h1M175 281.5h1M173 282.5h1M171 284.5h1M169 285.5h1M167 286.5h1M165 288.5h1M163 289.5h1M161 290.5h1M159 292.5h1M157 293.5h1M155 294.5h1M153 296.5h1M151 297.5h1M149 298.5h1M147 300.5h1M145 301.5h1M143 302.5h1M141 304.5h1M139 305.5h1M137 306.5h1M135 308.5h1M133 309.5h1M131 310.5h1M129 311.5h1M127 313.5h1M125 314.5h1M123 315.5h1M121 317.5h1M119 318.5h1M117 319.5h1M115 321.5h1M113 322.5h1M111 323.5h1" stroke="#808080" stroke-linecap="butt" shape-rendering="crispEdges"/>
<path d="M368 397.5h9M369 409.5h7M366.5 393v1M366.5 400v7M367.5 394v2M367.5 399v1M367.5 407v1M368.5 396v1M368.5 398v1M368.5 408v1M376.5 396v1M376.5 398v1M376.5 408v1M377.5 394v2M377.5 399v1M377.5 407v1M378.5 393v1M378.5 400v7" stroke="#ffff00" fill="none" stroke-linecap="butt" shape-rendering="crispEdges"/>
<path d="M348 413.5h3M348 417.5h3M347 419.5h5M347.5 414v3M349.5 418v1M349.5 420v2M351.5 414v3" stroke="#ffff00" fill="none" stroke-linecap="butt" shape-rendering="crispEdges"/>
<path d="M114 347.5h3M114 351.5h3M113 353.5h5M113.5 348v3M115.5 352v1M115.5 354v2M117.5 348v3" stroke="#ffff00" fill="none" stroke-linecap="butt" shape-rendering="crispEdges"/>
<path d="M395 351.5h2M399 354.5h2M403 357.5h2M406 359.5h2M410 362.5h2M413 364.5h2M417 367.5h2M421 370.5h2M394.5 350v1M397.5 352v1M398.5 353v1M401.5 355v1M402.5 356v1M405.5 358v1M408.5 360v1M409.5 361v1M412.5 363v1M415.5 365v1M416.5 366v1M419.5 368v1M420.5 369v1M423.5 371v1" stroke="#ffffff" stroke-linecap="butt" shape-rendering="crispEdges"/>
<path d="M175.5 405v2M176.5 402v3M177.5 399v3M178.5 396v3M179.5 394v2M180.5 391v3M181.5 388v3M182.5 385v3M183.5 383v2" stroke="#ffffff" stroke-linecap="butt" shape-rendering="crispEdges"/>
<path d="M239 239.5h1M238 241.5h1M237 243.5h1M237 245.5h1M236 247.5h1M235 249.5h1M234 251.5h1M234 253.5h1M233 255.5h1M232 257.5h1M231 259.5h1M230 261.5h1M230 263.5h1M229 265.5h1M228 267.5h1M227 269.5h1M227 271.5h1M226 273.5h1M225 275.5h1M224 277.5h1M223 279.5h1M223 281.5h1M222 283.5h1M221 285.5h1M220 287.5h1M220 289.5h1M219 291.5h1M218 293.5h1M217 295.5h1M216 297.5h1M216 299.5h1M215 301.5h1M214 303.5h1M213 305.5h1M213 307.5h1M212 309.5h1M211 311.5h1M210 313.5h1M209 315.5h1M209 317.5h1M208 319.5h1M207 321.5h1M206 323.5h1M206 325.5h1M205 327.5h1M204 329.5h1M203 331.5h1M202 333.5h1M202 335.5h1M201 337.5h1M200 339.5h1M199 341.5h1M199 343.5h1M198 345.5h1M197 347.5h1M196 349.5h1M195 351.5h1M195 353.5h1M194 355.5h1M193 357.5h1M192 359.5h1M192 361.5h1M191 363.5h1M190 365.5h1M189 367.5h1M188 369.5h1M188 371.5h1M187 373.5h1M186 375.5h1M185 377.5h1M185 379.5h1M184 381.5h1M183 383.5h1" stroke="#808080" stroke-linecap="butt" shape-rendering="crispEdges"/>
<path d="M431 307.5h11M431 319.5h11M429.5 305v1M429.5 321v1M430.5 306v1M430.5 320v1M433.5 308v11M439.5 308v11M442.5 306v1M442.5 320v1M443.5 305v1M443.5 321v1" stroke="#00ff00" fill="none" stroke-linecap="butt" shape-rendering="crispEdges"/>
<path d="M423 335.5h3M423 339.5h3M422 341.5h5M422.5 334v1M422.5 336v3M424.5 340v1M424.5 342v1M426.5 334v1M426.5 336v3" stroke="#00ff00" fill="none" stroke-linecap="butt" shape-rendering="crispEdges"/>
<path d="M201 399.5h3M201 403.5h3M200 405.5h5M200.5 398v1M200.5 400v3M202.5 404v1M202.5 406v1M204.5 398v1M204.5 400v3" stroke="#00ff00" fill="none" stroke-linecap="butt" shape-rendering="crispEdges"/>
<path d="M429 258.5h6M435 259.5h12M447 260.5h12M459 261.5h6" stroke="#ffffff" stroke-linecap="butt" shape-rendering="crispEdges"/>
<path d="M272.5 390v3M273.5 393v5M274.5 398v4M275.5 402v5M276.5 407v5M277.5 412v3" stroke="#ffffff" stroke-linecap="butt" shape-rendering="crispEdges"/>
<path d="M444 199.5h5M440 201.5h3M450 201.5h3M440 205.5h3M450 207.5h3M440 211.5h3M450 211.5h3M444 213.5h5M438.5 203v1M438.5 207v3M439.5 202v1M439.5 206v1M439.5 210v1M443.5 200v1M443.5 206v1M443.5 210v1M443.5 212v1M444.5 207v3M448.5 203v3M449.5 200v1M449.5 202v1M449.5 206v1M449.5 212v1M453.5 202v1M453.5 206v1M453.5 210v1M454.5 203v3M454.5 209v1" stroke="#00ffff" fill="none" stroke-linecap="butt" shape-rendering="crispEdges"/>
<path d="M447 229.5h3M450 230.5h2M450 236.5h2M447 237.5h3M446.5 230v1M446.5 236v1M447.5 231v1M447.5 235v1M448.5 232v3M451.5 231v1M451.5 235v1M452.5 232v3" stroke="#00ffff" fill="none" stroke-linecap="butt" shape-rendering="crispEdges"/>
<path d="M293 393.5h3M296 394.5h2M296 400.5h2M293 401.5h3M292.5 394v1M292.5 400v1M293.5 395v1M293.5 399v1M294.5 396v3M297.5 395v1M297.5 399v1M298.5 396v3" stroke="#00ffff" fill="none" stroke-linecap="butt" shape-rendering="crispEdges"/>
<path d="M445 146.5h2M443 147.5h2M441 148.5h2M439 149.5h2M437 150.5h2M434 151.5h3M432 152.5h2M430 153.5h2M428 154.5h2M426 155.5h2M423 156.5h3M421 157.5h2M419 158.5h2M417 159.5h2M415 160.5h2M413 161.5h2" stroke="#ffffff" stroke-linecap="butt" shape-rendering="crispEdges"/>
<path d="M340.5 356v1M341.5 357v1M342.5 358v1M343.5 359v1M344.5 360v2M345.5 362v1M346.5 363v1M347.5 364v1M348.5 365v1M349.5 366v1M350.5 367v1M351.5 368v1M352.5 369v2M353.5 371v1M354.5 372v1M355.5 373v1M356.5 374v1" stroke="#ffffff" stroke-linecap="butt" shape-rendering="crispEdges"/>
<path d="M239 239.5h1M241 241.5h1M242 243.5h1M244 245.5h1M246 247.5h1M248 249.5h1M249 251.5h1M251 253.5h1M253 255.5h1M255 257.5h1M256 259.5h1M258 261.5h1M260 263.5h1M261 265.5h1M263 267.5h1M265 269.5h1M267 271.5h1M268 273.5h1M270 275.5h1M272 277.5h1M274 279.5h1M275 281.5h1M277 283.5h1M279 285.5h1M280 287.5h1M282 289.5h1M284 291.5h1M286 293.5h1M287 295.5h1M289 297.5h1M291 299.5h1M293 301.5h1M294 303.5h1M296 305.5h1M298 307.5h1M299 309.5h1M301 311.5h1M303 313.5h1M305 315.5h1M306 317.5h1M308 319.5h1M310 321.5h1M312 323.5h1M313 325.5h1M315 327.5h1M317 329.5h1M318 331.5h1M320 333.5h1M322 335.5h1M324 337.5h1M325 339.5h1M327 341.5h1M329 343.5h1M331 345.5h1M332 347.5h1M334 349.5h1M336 351.5h1M337 353.5h1M339 355.5h1" stroke="#808080" stroke-linecap="butt" shape-rendering="crispEdges"/>
<path d="M399 98.5h5M393.5 110v1M394.5 111v1M395.5 102v5M395.5 112v1M396.5 101v1M396.5 107v1M396.5 111v1M397.5 100v1M397.5 108v3M398.5 99v1M404.5 99v1M405.5 100v1M405.5 108v3M406.5 101v1M406.5 107v1M406.5 111v1M407.5 102v5M407.5 112v1M408.5 113v1M409.5 114v1" stroke="#ff0000" fill="none" stroke-linecap="butt" shape-rendering="crispEdges"/>
<path d="M416 125.5h3M414 126.5h2M419 126.5h2M414 132.5h2M419 132.5h2M416 133.5h3M413.5 128v3M414.5 127v1M414.5 131v1M417.5 129v1M420.5 127v1M420.5 131v1M421.5 128v3" stroke="#ff0000" fill="none" stroke-linecap="butt" shape-rendering="crispEdges"/>
<path d="M361 349.5h3M359 350.5h2M364 350.5h2M359 356.5h2M364 356.5h2M361 357.5h3M358.5 352v3M359.5 351v1M359.5 355v1M362.5 353v1M365.5 351v1M365.5 355v1M366.5 352v3" stroke="#ff0000" fill="none" stroke-linecap="butt" shape-rendering="crispEdges"/>
<path d="M350.5 84v1M351.5 82v2M352.5 81v1M353.5 80v1M354.5 78v2M355.5 77v1M356.5 76v1M357.5 74v2M358.5 73v1M359.5 71v2M360.5 70v1M361.5 69v1M362.5 67v2M363.5 66v1M364.5 64v2M365.5 63v1M366.5 62v1M367.5 60v2M368.5 59v1M369.5 58v1M370.5 56v2M371.5 55v1" stroke="#ffffff" stroke-linecap="butt" shape-rendering="crispEdges"/>
<path d="M380 302.5h2M382 303.5h2M384 304.5h2M386 305.5h2M388 306.5h2M390 307.5h3M393 308.5h2M395 309.5h2M397 310.5h2M399 311.5h2M401 312.5h2" stroke="#ffffff" stroke-linecap="butt" shape-rendering="crispEdges"/>
<path d="M239 239.5h1M241 240.5h1M243 241.5h1M245 242.5h1M247 243.5h1M249 243.5h1M251 244.5h1M253 245.5h1M255 246.5h1M257 247.5h1M259 248.5h1M261 249.5h1M263 250.5h1M265 251.5h1M267 252.5h1M269 252.5h1M271 253.5h1M273 254.5h1M275 255.5h1M277 256.5h1M279 257.5h1M281 258.5h1M283 259.5h1M285 260.5h1M287 260.5h1M289 261.5h1M291 262.5h1M293 263.5h1M295 264.5h1M297 265.5h1M299 266.5h1M301 267.5h1M303 268.5h1M305 268.5h1M307 269.5h1M309 270.5h1M311 271.5h1M313 272.5h1M315 273.5h1M317 274.5h1M319 275.5h1M321 276.5h1M323 277.5h1M325 277.5h1M327 278.5h1M329 279.5h1M331 280.5h1M333 281.5h1M335 282.5h1M337 283.5h1M339 284.5h1M341 285.5h1M343 285.5h1M345 286.5h1M347 287.5h1M349 288.5h1M351 289.5h1M353 290.5h1M355 291.5h1M357 292.5h1M359 293.5h1M361 294.5h1M363 294.5h1M365 295.5h1M367 296.5h1M369 297.5h1M371 298.5h1M373 299.5h1M375 300.5h1M377 301.5h1M379 302.5h1" stroke="#808080" stroke-linecap="butt" shape-rendering="crispEdges"/>
<path d="M318 38.5h2M315 40.5h2M305.5 35v1M306.5 36v1M307.5 37v13M308.5 36v1M309.5 35v1M310.5 36v1M311.5 37v13M312.5 36v1M313.5 35v1M314.5 36v1M315.5 37v3M315.5 41v7M315.5 51v1M316.5 48v1M316.5 50v1M317.5 39v1M317.5 49v1M318.5 48v1M318.5 50v1M319.5 37v1M319.5 39v9M319.5 51v1" stroke="#ffff00" fill="none" stroke-linecap="butt" shape-rendering="crispEdges"/>
<path d="M337 51.5h3M337 55.5h3M336 57.5h5M336.5 50v1M336.5 52v3M338.5 56v1M338.5 58v1M340.5 50v1M340.5 52v3" stroke="#00ff00" fill="none" stroke-linecap="butt" shape-rendering="crispEdges"/>
<path d="M397 288.5h3M397 292.5h3M396 294.5h5M396.5 287v1M396.5 289v3M398.5 293v1M398.5 295v1M400.5 287v1M400.5 289v3" stroke="#00ff00" fill="none" stroke-linecap="butt" shape-rendering="crispEdges"/>
<path d="M258.5 44v6M259.5 32v12M260.5 20v12M261.5 14v6" stroke="#ffffff" stroke-linecap="butt" shape-rendering="crispEdges"/>
<path d="M394 239.5h25" stroke="#ffffff" stroke-linecap="butt" shape-rendering="crispEdges"/>
<path d="M204 28.5h5M198 34.5h7M208 34.5h7M198 38.5h17M202.5 30v3M203.5 29v1M203.5 33v1M209.5 29v1M209.5 33v1M210.5 30v3" stroke="#00ff00" fill="none" stroke-linecap="butt" shape-rendering="crispEdges"/>
<path d="M232 25.5h3M232 29.5h3M231 31.5h5M231.5 26v3M233.5 30v1M233.5 32v2M235.5 26v3" stroke="#ffff00" fill="none" stroke-linecap="butt" shape-rendering="crispEdges"/>
<path d="M404 211.5h3M404 215.5h3M403 217.5h5M403.5 212v3M405.5 216v1M405.5 218v2M407.5 212v3" stroke="#ffff00" fill="none" stroke-linecap="butt" shape-rendering="crispEdges"/>
<path d="M146.5 32v2M147.5 34v2M148.5 36v2M149.5 38v2M150.5 40v2M151.5 42v3M152.5 45v2M153.5 47v2M154.5 49v2M155.5 51v2M156.5 53v3M157.5 56v2M158.5 58v2M159.5 60v2M160.5 62v2M161.5 64v2" stroke="#ffffff" stroke-linecap="butt" shape-rendering="crispEdges"/>
<path d="M386 142.5h2M383 144.5h2M380 146.5h2M378 147.5h2M375 149.5h2M372 151.5h2M369 153.5h2M368.5 154v1M371.5 152v1M374.5 150v1M377.5 148v1M382.5 145v1M385.5 143v1M388.5 141v1" stroke="#ffffff" stroke-linecap="butt" shape-rendering="crispEdges"/>
<path d="M239 239.5h1M241 238.5h1M243 236.5h1M245 235.5h1M247 234.5h1M249 232.5h1M251 231.5h1M253 230.5h1M255 228.5h1M257 227.5h1M259 226.5h1M261 225.5h1M263 223.5h1M265 222.5h1M267 221.5h1M269 219.5h1M271 218.5h1M273 217.5h1M275 215.5h1M277 214.5h1M279 213.5h1M281 211.5h1M283 210.5h1M285 209.5h1M287 207.5h1M289 206.5h1M291 205.5h1M293 203.5h1M295 202.5h1M297 201.5h1M299 199.5h1M301 198.5h1M303 197.5h1M305 196.5h1M307 194.5h1M309 193.5h1M311 192.5h1M313 190.5h1M315 189.5h1M317 188.5h1M319 186.5h1M321 185.5h1M323 184.5h1M325 182.5h1M327 181.5h1M329 180.5h1M331 178.5h1M333 177.5h1M335 176.5h1M337 174.5h1M339 173.5h1M341 172.5h1M343 170.5h1M345 169.5h1M347 168.5h1M349 167.5h1M351 165.5h1M353 164.5h1M355 163.5h1M357 161.5h1M359 160.5h1M361 159.5h1M363 157.5h1M365 156.5h1M367 155.5h1" stroke="#808080" stroke-linecap="butt" shape-rendering="crispEdges"/>
<path d="M112 81.5h3M110 85.5h2M98.5 69v1M99.5 70v1M100.5 71v13M101.5 70v1M102.5 69v1M103.5 70v1M104.5 71v13M105.5 70v1M106.5 69v1M107.5 70v1M108.5 71v13M109.5 84v1M112.5 84v1M113.5 80v1M113.5 82v2" stroke="#00ffff" fill="none" stroke-linecap="butt" shape-rendering="crispEdges"/>
<path d="M126 57.5h6M126 61.5h6M126 65.5h6M126.5 58v3M126.5 62v3M132.5 58v3" stroke="#00ffff" fill="none" stroke-linecap="butt" shape-rendering="crispEdges"/>
<path d="M360 123.5h6M360 127.5h6M360 131.5h6M360.5 124v3M360.5 128v3M366.5 124v3" stroke="#00ffff" fill="none" stroke-linecap="butt" shape-rendering="crispEdges"/>
<path d="M56 108.5h2M60 111.5h2M64 114.5h2M67 116.5h2M71 119.5h2M74 121.5h2M78 124.5h2M82 127.5h2M55.5 107v1M58.5 109v1M59.5 110v1M62.5 112v1M63.5 113v1M66.5 115v1M69.5 117v1M70.5 118v1M73.5 120v1M76.5 122v1M77.5 123v1M80.5 125v1M81.5 126v1M84.5 128v1" stroke="#ffffff" stroke-linecap="butt" shape-rendering="crispEdges"/>
<path d="M295.5 94v2M296.5 91v3M297.5 88v3M298.5 85v3M299.5 83v2M300.5 80v3M301.5 77v3M302.5 74v3M303.5 72v2" stroke="#ffffff" stroke-linecap="butt" shape-rendering="crispEdges"/>
<path d="M239 239.5h1M240 237.5h1M241 235.5h1M241 233.5h1M242 231.5h1M243 229.5h1M244 227.5h1M244 225.5h1M245 223.5h1M246 221.5h1M247 219.5h1M248 217.5h1M248 215.5h1M249 213.5h1M250 211.5h1M251 209.5h1M251 207.5h1M252 205.5h1M253 203.5h1M254 201.5h1M255 199.5h1M255 197.5h1M256 195.5h1M257 193.5h1M258 191.5h1M258 189.5h1M259 187.5h1M260 185.5h1M261 183.5h1M262 181.5h1M262 179.5h1M263 177.5h1M264 175.5h1M265 173.5h1M265 171.5h1M266 169.5h1M267 167.5h1M268 165.5h1M269 163.5h1M269 161.5h1M270 159.5h1M271 157.5h1M272 155.5h1M272 153.5h1M273 151.5h1M274 149.5h1M275 147.5h1M276 145.5h1M276 143.5h1M277 141.5h1M278 139.5h1M279 137.5h1M279 135.5h1M280 133.5h1M281 131.5h1M282 129.5h1M283 127.5h1M283 125.5h1M284 123.5h1M285 121.5h1M286 119.5h1M286 117.5h1M287 115.5h1M288 113.5h1M289 111.5h1M290 109.5h1M290 107.5h1M291 105.5h1M292 103.5h1M293 101.5h1M293 99.5h1M294 97.5h1M295 95.5h1" stroke="#808080" stroke-linecap="butt" shape-rendering="crispEdges"/>
<path d="M47 157.5h5M50 158.5h2M35.5 173v1M36.5 172v1M37.5 163v1M37.5 171v1M38.5 164v1M38.5 170v1M39.5 165v1M39.5 169v1M40.5 166v1M40.5 168v1M41.5 167v1M42.5 166v1M42.5 168v1M43.5 165v1M43.5 169v1M44.5 164v1M44.5 170v1M45.5 163v1M45.5 171v1M46.5 162v1M47.5 161v1M48.5 160v1M49.5 159v1M51.5 159v3" stroke="#ff0000" fill="none" stroke-linecap="butt" shape-rendering="crispEdges"/>
<path d="M51 137.5h2M51 143.5h8M51.5 142v1M52.5 140v2M53.5 138v2M56.5 137v6M56.5 144v1M57.5 136v1" stroke="#ff0000" fill="none" stroke-linecap="butt" shape-rendering="crispEdges"/>
<path d="M273 73.5h2M273 79.5h8M273.5 78v1M274.5 76v2M275.5 74v2M278.5 73v6M278.5 80v1M279.5 72v1" stroke="#ff0000" fill="none" stroke-linecap="butt" shape-rendering="crispEdges"/>
<path d="M14 217.5h6M20 218.5h12M32 219.5h12M44 220.5h6" stroke="#ffffff" stroke-linecap="butt" shape-rendering="crispEdges"/>
<path d="M201.5 64v3M202.5 67v5M203.5 72v4M204.5 76v5M205.5 81v5M206.5 86v3" stroke="#ffffff" stroke-linecap="butt" shape-rendering="crispEdges"/>
<path d="M24 264.5h3M34 264.5h7M28 266.5h5M32 272.5h7M34 280.5h5M26.5 280v1M27.5 265v1M27.5 279v1M28.5 276v3M29.5 275v1M30.5 274v1M31.5 273v1M32.5 276v3M33.5 265v1M33.5 275v1M33.5 279v1M34.5 270v2M34.5 273v2M35.5 269v1M36.5 268v1M37.5 267v1M38.5 266v1M39.5 265v1M39.5 273v1M39.5 279v1M40.5 274v5" stroke="#ffff00" fill="none" stroke-linecap="butt" shape-rendering="crispEdges"/>
<path d="M26 242.5h5M30 244.5h2M28 245.5h2M28.5 241v1M28.5 243v2M28.5 246v3M31.5 247v2M32.5 245v2M32.5 249v1" stroke="#ffff00" fill="none" stroke-linecap="butt" shape-rendering="crispEdges"/>
<path d="M180 78.5h5M184 80.5h2M182 81.5h2M182.5 77v1M182.5 79v2M182.5 82v3M185.5 83v2M186.5 81v2M186.5 85v1" stroke="#ffff00" fill="none" stroke-linecap="butt" shape-rendering="crispEdges"/>
<path d="M64 317.5h2M62 318.5h2M60 319.5h2M58 320.5h2M56 321.5h2M53 322.5h3M51 323.5h2M49 324.5h2M47 325.5h2M45 326.5h2M42 327.5h3M40 328.5h2M38 329.5h2M36 330.5h2M34 331.5h2M32 332.5h2" stroke="#ffffff" stroke-linecap="butt" shape-rendering="crispEdges"/>
<path d="M122.5 104v1M123.5 105v1M124.5 106v1M125.5 107v1M126.5 108v2M127.5 110v1M128.5 111v1M129.5 112v1M130.5 113v1M131.5 114v1M132.5 115v1M133.5 116v1M134.5 117v2M135.5 119v1M136.5 120v1M137.5 121v1M138.5 122v1" stroke="#ffffff" stroke-linecap="butt" shape-rendering="crispEdges"/>
<path d="M239 239.5h1M237 237.5h1M236 235.5h1M234 233.5h1M232 231.5h1M230 229.5h1M229 227.5h1M227 225.5h1M225 223.5h1M223 221.5h1M222 219.5h1M220 217.5h1M218 215.5h1M217 213.5h1M215 211.5h1M213 209.5h1M211 207.5h1M210 205.5h1M208 203.5h1M206 201.5h1M204 199.5h1M203 197.5h1M201 195.5h1M199 193.5h1M198 191.5h1M196 189.5h1M194 187.5h1M192 185.5h1M191 183.5h1M189 181.5h1M187 179.5h1M185 177.5h1M184 175.5h1M182 173.5h1M180 171.5h1M179 169.5h1M177 167.5h1M175 165.5h1M173 163.5h1M172 161.5h1M170 159.5h1M168 157.5h1M166 155.5h1M165 153.5h1M163 151.5h1M161 149.5h1M160 147.5h1M158 145.5h1M156 143.5h1M154 141.5h1M153 139.5h1M151 137.5h1M149 135.5h1M147 133.5h1M146 131.5h1M144 129.5h1M142 127.5h1M141 125.5h1M139 123.5h1" stroke="#808080" stroke-linecap="butt" shape-rendering="crispEdges"/>
<path d="M72 365.5h2M78 365.5h2M75 369.5h2M81 369.5h2M72 375.5h2M78 375.5h2M75 379.5h2M81 379.5h2M69.5 370v1M69.5 380v1M70.5 369v1M70.5 379v1M71.5 366v3M71.5 376v3M73.5 364v1M73.5 366v1M73.5 374v1M73.5 376v1M74.5 367v1M74.5 377v1M75.5 368v1M75.5 370v1M75.5 378v1M75.5 380v1M77.5 366v3M77.5 376v3M79.5 364v1M79.5 366v1M79.5 374v1M79.5 376v1M80.5 367v1M80.5 377v1M81.5 368v1M81.5 370v1M81.5 378v1M81.5 380v1M83.5 366v3M83.5 376v3M84.5 365v1M84.5 375v1M85.5 364v1M85.5 374v1" stroke="#00ff00" fill="none" stroke-linecap="butt" shape-rendering="crispEdges"/>
<path d="M60 346.5h3M60 349.5h3M60 353.5h3M59.5 347v1M59.5 350v3M61.5 345v1M61.5 347v2M61.5 351v1M63.5 347v1M63.5 350v3" stroke="#00ff00" fill="none" stroke-linecap="butt" shape-rendering="crispEdges"/>
<path d="M115 122.5h3M115 125.5h3M115 129.5h3M114.5 123v1M114.5 126v3M116.5 121v1M116.5 123v2M116.5 127v1M118.5 123v1M118.5 126v3" stroke="#00ff00" fill="none" stroke-linecap="butt" shape-rendering="crispEdges"/>
<path d="M107.5 423v1M108.5 421v2M109.5 420v1M110.5 419v1M111.5 417v2M112.5 416v1M113.5 415v1M114.5 413v2M115.5 412v1M116.5 410v2M117.5 409v1M118.5 408v1M119.5 406v2M120.5 405v1M121.5 403v2M122.5 402v1M123.5 401v1M124.5 399v2M125.5 398v1M126.5 397v1M127.5 395v2M128.5 394v1" stroke="#ffffff" stroke-linecap="butt" shape-rendering="crispEdges"/>
<path d="M76 166.5h2M78 167.5h2M80 168.5h2M82 169.5h2M84 170.5h2M86 171.5h3M89 172.5h2M91 173.5h2M93 174.5h2M95 175.5h2M97 176.5h2" stroke="#ffffff" stroke-linecap="butt" shape-rendering="crispEdges"/>
<path d="M239 239.5h1M237 238.5h1M235 237.5h1M233 236.5h1M231 235.5h1M229 235.5h1M227 234.5h1M225 233.5h1M223 232.5h1M221 231.5h1M219 230.5h1M217 229.5h1M215 228.5h1M213 227.5h1M211 226.5h1M209 226.5h1M207 225.5h1M205 224.5h1M203 223.5h1M201 222.5h1M199 221.5h1M197 220.5h1M195 219.5h1M193 218.5h1M191 218.5h1M189 217.5h1M187 216.5h1M185 215.5h1M183 214.5h1M181 213.5h1M179 212.5h1M177 211.5h1M175 210.5h1M173 210.5h1M171 209.5h1M169 208.5h1M167 207.5h1M165 206.5h1M163 205.5h1M161 204.5h1M159 203.5h1M157 202.5h1M155 201.5h1M153 201.5h1M151 200.5h1M149 199.5h1M147 198.5h1M145 197.5h1M143 196.5h1M141 195.5h1M139 194.5h1M137 193.5h1M135 193.5h1M133 192.5h1M131 191.5h1M129 190.5h1M127 189.5h1M125 188.5h1M123 187.5h1M121 186.5h1M119 185.5h1M117 184.5h1M115 184.5h1M113 183.5h1M111 182.5h1M109 181.5h1M107 180.5h1M105 179.5h1M103 178.5h1M101 177.5h1M99 176.5h1" stroke="#808080" stroke-linecap="butt" shape-rendering="crispEdges"/>
<path d="M157 435.5h17M157.5 427v1M157.5 443v1M158.5 428v1M158.5 442v1M159.5 429v1M159.5 441v1M160.5 430v2M160.5 439v2M161.5 432v3M161.5 436v3M169.5 432v3M169.5 436v3M170.5 430v2M170.5 439v2M171.5 429v1M171.5 441v1M172.5 428v1M172.5 442v1M173.5 427v1M173.5 443v1" stroke="#00ffff" fill="none" stroke-linecap="butt" shape-rendering="crispEdges"/>
<path d="M136 421.5h2M139 421.5h3M143 421.5h2M139 424.5h3M138 426.5h5M137.5 420v1M137.5 422v1M138.5 423v1M140.5 420v1M140.5 422v2M140.5 425v1M140.5 427v2M142.5 423v1M143.5 420v1M143.5 422v1" stroke="#00ffff" fill="none" stroke-linecap="butt" shape-rendering="crispEdges"/>
<path d="M76 184.5h2M79 184.5h3M83 184.5h2M79 187.5h3M78 189.5h5M77.5 183v1M77.5 185v1M78.5 186v1M80.5 183v1M80.5 185v2M80.5 188v1M80.5 190v2M82.5 186v1M83.5 183v1M83.5 185v1" stroke="#00ffff" fill="none" stroke-linecap="butt" shape-rendering="crispEdges"/>
<text x="78.5" y="292" fill="#ff0000" font-size="12.6" text-anchor="middle" stroke="#000" stroke-width="0.12">1</text>
<text x="133.5" y="374" fill="#ffff00" font-size="12.6" text-anchor="middle" stroke="#000" stroke-width="0.12">2</text>
<text x="225.5" y="411" fill="#00ff00" font-size="12.6" text-anchor="middle" stroke="#000" stroke-width="0.12">3</text>
<text x="313.5" y="394" fill="#00ffff" font-size="12.6" text-anchor="middle" stroke="#000" stroke-width="0.12">4</text>
<text x="372.5" y="344" fill="#ff0000" font-size="12.6" text-anchor="middle" stroke="#000" stroke-width="0.12">5</text>
<text x="402.5" y="279" fill="#ffff00" font-size="12.6" text-anchor="middle" stroke="#000" stroke-width="0.12">6</text>
<text x="398.5" y="196" fill="#00ff00" font-size="12.6" text-anchor="middle" stroke="#000" stroke-width="0.12">7</text>
<text x="343.5" y="114" fill="#00ffff" font-size="12.6" text-anchor="middle" stroke="#000" stroke-width="0.12">8</text>
<text x="251.5" y="77" fill="#ff0000" font-size="12.6" text-anchor="middle" stroke="#000" stroke-width="0.12">9</text>
<text x="165.25" y="94" fill="#ffff00" font-size="12.6" text-anchor="middle" letter-spacing="1.5" stroke="#000" stroke-width="0.12">10</text>
<text x="106.25" y="144" fill="#00ff00" font-size="12.6" text-anchor="middle" letter-spacing="1.5" stroke="#000" stroke-width="0.12">11</text>
<text x="76.25" y="209" fill="#00ffff" font-size="12.6" text-anchor="middle" letter-spacing="1.5" stroke="#000" stroke-width="0.12">12</text>
<path d="M149 310.5h1M150 307.5h1M151 304.5h1M152 301.5h1M153 298.5h1M154 295.5h1M155 292.5h1M157 289.5h1M158 286.5h1M159 283.5h1M160 280.5h1M161 277.5h1M162 274.5h1M163 271.5h1M164 268.5h1M165 265.5h1M166 262.5h1M167 259.5h1M168 256.5h1M170 253.5h1M171 250.5h1M172 247.5h1M173 244.5h1M174 241.5h1M175 238.5h1M176 235.5h1M177 232.5h1M178 229.5h1M179 226.5h1M180 223.5h1M181 220.5h1M183 217.5h1M184 214.5h1M185 211.5h1M186 208.5h1M187 205.5h1M188 202.5h1M189 199.5h1M190 196.5h1M191 193.5h1M192 190.5h1M193 187.5h1M194 184.5h1M196 181.5h1M197 178.5h1M198 175.5h1M199 172.5h1M200 169.5h1M201 166.5h1M202 163.5h1M203 160.5h1M204 157.5h1M205 154.5h1M206 151.5h1M207 148.5h1M209 145.5h1M210 142.5h1M211 139.5h1M212 136.5h1M213 133.5h1M214 130.5h1M215 127.5h1" stroke="#00ff00" stroke-linecap="butt" shape-rendering="crispEdges"/>
<path d="M145 305.5h1M147 301.5h1M148 297.5h1M150 293.5h1M151 289.5h1M153 285.5h1M154 281.5h1M156 277.5h1M158 273.5h1M159 269.5h1M161 265.5h1M162 261.5h1M164 257.5h1M165 253.5h1M167 249.5h1M169 245.5h1M170 241.5h1M172 237.5h1M173 233.5h1M175 229.5h1M176 225.5h1M178 221.5h1M180 217.5h1M181 213.5h1M183 209.5h1M184 205.5h1M186 201.5h1M187 197.5h1M189 193.5h1M191 189.5h1M192 185.5h1M194 181.5h1M195 177.5h1M197 173.5h1M198 169.5h1M200 165.5h1M202 161.5h1M203 157.5h1M205 153.5h1M206 149.5h1M208 145.5h1M209 141.5h1M211 137.5h1M213 133.5h1M214 129.5h1" stroke="#00ff00" stroke-linecap="butt" shape-rendering="crispEdges"/>
<path d="M125 240.5h2M127 241.5h2M130 243.5h2M132 244.5h2M134 245.5h2M137 247.5h2M139 248.5h2M142 250.5h2M144 251.5h2M146 252.5h2M149 254.5h2M151 255.5h2M154 257.5h2M156 258.5h2M158 259.5h2M161 261.5h2M163 262.5h2M166 264.5h2M168 265.5h2M170 266.5h2M173 268.5h2M175 269.5h2M178 271.5h2M180 272.5h2M183 274.5h2M185 275.5h2M187 276.5h2M190 278.5h2M192 279.5h2M195 281.5h2M197 282.5h2M199 283.5h2M202 285.5h2M204 286.5h2M207 288.5h2M209 289.5h2M211 290.5h2M214 292.5h2M216 293.5h2M219 295.5h2M221 296.5h2M223 297.5h2M226 299.5h2M228 300.5h2M231 302.5h2M233 303.5h2M235 304.5h2M238 306.5h2M240 307.5h2M243 309.5h2M245 310.5h2M248 312.5h2M250 313.5h2M252 314.5h2M255 316.5h2M257 317.5h2M260 319.5h2M262 320.5h2M264 321.5h2M267 323.5h2M269 324.5h2M272 326.5h2M274 327.5h2M276 328.5h2M279 330.5h2M281 331.5h2M284 333.5h2M286 334.5h2M288 335.5h2M291 337.5h2M293 338.5h2M124.5 239v1M129.5 242v1M136.5 246v1M141.5 249v1M148.5 253v1M153.5 256v1M160.5 260v1M165.5 263v1M172.5 267v1M177.5 270v1M182.5 273v1M189.5 277v1M194.5 280v1M201.5 284v1M206.5 287v1M213.5 291v1M218.5 294v1M225.5 298v1M230.5 301v1M237.5 305v1M242.5 308v1M247.5 311v1M254.5 315v1M259.5 318v1M266.5 322v1M271.5 325v1M278.5 329v1M283.5 332v1M290.5 336v1M295.5 339v1" stroke="#00ff00" stroke-linecap="butt" shape-rendering="crispEdges"/>
<path d="M303 144.5h1M300 146.5h1M297 147.5h1M294 149.5h1M291 150.5h1M288 152.5h1M285 154.5h1M282 155.5h1M279 157.5h1M276 158.5h1M273 160.5h1M270 162.5h1M267 163.5h1M264 165.5h1M261 166.5h1M258 168.5h1M255 169.5h1M252 171.5h1M249 173.5h1M246 174.5h1M243 176.5h1M240 177.5h1M237 179.5h1M234 181.5h1M231 182.5h1M228 184.5h1M225 185.5h1M222 187.5h1M219 189.5h1M216 190.5h1M213 192.5h1M210 193.5h1M207 195.5h1M204 197.5h1M201 198.5h1M198 200.5h1M195 201.5h1M192 203.5h1M189 205.5h1M186 206.5h1M183 208.5h1M180 209.5h1M177 211.5h1M174 212.5h1M171 214.5h1M168 216.5h1M165 217.5h1M162 219.5h1M159 220.5h1M156 222.5h1M153 224.5h1M150 225.5h1M147 227.5h1M144 228.5h1M141 230.5h1M138 232.5h1M135 233.5h1M132 235.5h1M129 236.5h1M126 238.5h1" stroke="#00ff00" stroke-linecap="butt" shape-rendering="crispEdges"/>
<path d="M149 310.5h1M152 308.5h1M155 305.5h1M158 303.5h1M161 301.5h1M164 299.5h1M167 296.5h1M170 294.5h1M173 292.5h1M176 289.5h1M179 287.5h1M182 285.5h1M185 283.5h1M188 280.5h1M191 278.5h1M194 276.5h1M197 274.5h1M200 271.5h1M203 269.5h1M206 267.5h1M209 264.5h1M212 262.5h1M215 260.5h1M218 258.5h1M221 255.5h1M224 253.5h1M227 251.5h1M230 248.5h1M233 246.5h1M236 244.5h1M239 242.5h1M242 239.5h1M245 237.5h1M248 235.5h1M251 233.5h1M254 230.5h1M257 228.5h1M260 226.5h1M263 223.5h1M266 221.5h1M269 219.5h1M272 217.5h1M275 214.5h1M278 212.5h1M281 210.5h1M284 207.5h1M287 205.5h1M290 203.5h1M293 201.5h1M296 198.5h1M299 196.5h1M302 194.5h1M305 192.5h1M308 189.5h1M311 187.5h1M314 185.5h1M317 182.5h1M320 180.5h1M323 178.5h1M326 176.5h1M329 173.5h1M332 171.5h1" stroke="#0000ff" stroke-linecap="butt" shape-rendering="crispEdges"/>
<path d="M330 172.5h2M326 175.5h2M323 177.5h2M319 180.5h2M316 182.5h2M312 185.5h2M309 187.5h2M305 190.5h2M302 192.5h2M298 195.5h2M294 198.5h2M291 200.5h2M287 203.5h2M284 205.5h2M280 208.5h2M277 210.5h2M273 213.5h2M270 215.5h2M266 218.5h2M263 220.5h2M259 223.5h2M256 225.5h2M252 228.5h2M249 230.5h2M245 233.5h2M242 235.5h2M238 238.5h2M234 241.5h2M231 243.5h2M227 246.5h2M224 248.5h2M220 251.5h2M217 253.5h2M213 256.5h2M210 258.5h2M206 261.5h2M203 263.5h2M199 266.5h2M196 268.5h2M192 271.5h2M189 273.5h2M185 276.5h2M182 278.5h2M178 281.5h2M174 284.5h2M171 286.5h2M167 289.5h2M164 291.5h2M160 294.5h2M157 296.5h2M153 299.5h2M150 301.5h2M146 304.5h2M145.5 305v1M148.5 303v1M149.5 302v1M152.5 300v1M155.5 298v1M156.5 297v1M159.5 295v1M162.5 293v1M163.5 292v1M166.5 290v1M169.5 288v1M170.5 287v1M173.5 285v1M176.5 283v1M177.5 282v1M180.5 280v1M181.5 279v1M184.5 277v1M187.5 275v1M188.5 274v1M191.5 272v1M194.5 270v1M195.5 269v1M198.5 267v1M201.5 265v1M202.5 264v1M205.5 262v1M208.5 260v1M209.5 259v1M212.5 257v1M215.5 255v1M216.5 254v1M219.5 252v1M222.5 250v1M223.5 249v1M226.5 247v1M229.5 245v1M230.5 244v1M233.5 242v1M236.5 240v1M237.5 239v1M240.5 237v1M241.5 236v1M244.5 234v1M247.5 232v1M248.5 231v1M251.5 229v1M254.5 227v1M255.5 226v1M258.5 224v1M261.5 222v1M262.5 221v1M265.5 219v1M268.5 217v1M269.5 216v1M272.5 214v1M275.5 212v1M276.5 211v1M279.5 209v1M282.5 207v1M283.5 206v1M286.5 204v1M289.5 202v1M290.5 201v1M293.5 199v1M296.5 197v1M297.5 196v1M300.5 194v1M301.5 193v1M304.5 191v1M307.5 189v1M308.5 188v1M311.5 186v1M314.5 184v1M315.5 183v1M318.5 181v1M321.5 179v1M322.5 178v1M325.5 176v1M328.5 174v1M329.5 173v1M332.5 171v1" stroke="#0000ff" stroke-linecap="butt" shape-rendering="crispEdges"/>
<path d="M136 290.5h1M136 286.5h1M136 282.5h1M136 278.5h1M136 274.5h1M136 270.5h1M136 266.5h1M137 262.5h1M137 258.5h1M137 254.5h1M137 250.5h1M137 246.5h1M137 242.5h1M137 238.5h1M137 234.5h1M137 230.5h1M137 226.5h1M137 222.5h1M137 218.5h1M137 214.5h1M138 210.5h1M138 206.5h1M138 202.5h1M138 198.5h1M138 194.5h1M138 190.5h1M138 186.5h1" stroke="#00ffff" stroke-linecap="butt" shape-rendering="crispEdges"/>
<path d="M145 305.5h1M145 302.5h1M145 299.5h1M144 296.5h1M144 293.5h1M144 290.5h1M144 287.5h1M144 284.5h1M144 281.5h1M143 278.5h1M143 275.5h1M143 272.5h1M143 269.5h1M143 266.5h1M143 263.5h1M142 260.5h1M142 257.5h1M142 254.5h1M142 251.5h1M142 248.5h1M142 245.5h1M141 242.5h1M141 239.5h1M141 236.5h1M141 233.5h1M141 230.5h1M140 227.5h1M140 224.5h1M140 221.5h1M140 218.5h1M140 215.5h1M140 212.5h1M139 209.5h1M139 206.5h1M139 203.5h1M139 200.5h1M139 197.5h1M139 194.5h1M138 191.5h1M138 188.5h1M138 185.5h1" stroke="#00ffff" stroke-linecap="butt" shape-rendering="crispEdges"/>
<path d="M303 144.5h1M299 145.5h1M295 146.5h1M291 147.5h1M287 148.5h1M283 149.5h1M279 150.5h1M275 151.5h1M271 152.5h1M267 153.5h1M263 154.5h1M259 155.5h1M255 156.5h1M251 157.5h1M247 158.5h1M243 159.5h1M239 160.5h1M235 161.5h1M231 162.5h1M227 163.5h1M223 164.5h1M219 165.5h1M215 166.5h1M211 167.5h1M207 168.5h1M203 169.5h1M199 170.5h1M195 171.5h1M191 172.5h1M187 173.5h1M183 174.5h1M179 175.5h1M175 176.5h1M171 177.5h1M167 178.5h1M163 179.5h1M159 180.5h1M155 181.5h1M151 182.5h1M147 183.5h1M143 184.5h1M139 185.5h1" stroke="#ff0000" stroke-linecap="butt" shape-rendering="crispEdges"/>
<path d="M295 339.5h1M293 338.5h1M291 338.5h1M289 337.5h1M287 337.5h1M285 336.5h1M283 335.5h1M281 335.5h1M279 334.5h1M277 333.5h1M275 333.5h1M273 332.5h1M271 332.5h1M269 331.5h1M267 330.5h1M265 330.5h1M263 329.5h1M261 329.5h1M259 328.5h1M257 327.5h1M255 327.5h1M253 326.5h1M251 325.5h1M249 325.5h1M247 324.5h1M245 324.5h1M243 323.5h1M241 322.5h1M239 322.5h1M237 321.5h1M235 321.5h1M233 320.5h1M231 319.5h1M229 319.5h1M227 318.5h1M225 317.5h1M223 317.5h1M221 316.5h1M219 316.5h1M217 315.5h1M215 314.5h1M213 314.5h1M211 313.5h1M209 312.5h1M207 312.5h1M205 311.5h1M203 311.5h1M201 310.5h1M199 309.5h1M197 309.5h1M195 308.5h1M193 308.5h1M191 307.5h1M189 306.5h1M187 306.5h1M185 305.5h1M183 304.5h1M181 304.5h1M179 303.5h1M177 303.5h1M175 302.5h1M173 301.5h1M171 301.5h1M169 300.5h1M167 300.5h1M165 299.5h1M163 298.5h1M161 298.5h1M159 297.5h1M157 296.5h1M155 296.5h1M153 295.5h1M151 295.5h1M149 294.5h1M147 293.5h1M145 293.5h1M143 292.5h1M141 292.5h1M139 291.5h1M137 290.5h1" stroke="#ff0000" stroke-linecap="butt" shape-rendering="crispEdges"/>
<path d="M315 325.5h1M313 325.5h1M311 325.5h1M309 324.5h1M307 324.5h1M305 324.5h1M303 324.5h1M301 324.5h1M299 324.5h1M297 323.5h1M295 323.5h1M293 323.5h1M291 323.5h1M289 323.5h1M287 322.5h1M285 322.5h1M283 322.5h1M281 322.5h1M279 322.5h1M277 322.5h1M275 321.5h1M273 321.5h1M271 321.5h1M269 321.5h1M267 321.5h1M265 320.5h1M263 320.5h1M261 320.5h1M259 320.5h1M257 320.5h1M255 320.5h1M253 319.5h1M251 319.5h1M249 319.5h1M247 319.5h1M245 319.5h1M243 318.5h1M241 318.5h1M239 318.5h1M237 318.5h1M235 318.5h1M233 318.5h1M231 317.5h1M229 317.5h1M227 317.5h1M225 317.5h1M223 317.5h1M221 317.5h1M219 316.5h1M217 316.5h1M215 316.5h1M213 316.5h1M211 316.5h1M209 315.5h1M207 315.5h1M205 315.5h1M203 315.5h1M201 315.5h1M199 315.5h1M197 314.5h1M195 314.5h1M193 314.5h1M191 314.5h1M189 314.5h1M187 313.5h1M185 313.5h1M183 313.5h1M181 313.5h1M179 313.5h1M177 313.5h1M175 312.5h1M173 312.5h1M171 312.5h1M169 312.5h1M167 312.5h1M165 311.5h1M163 311.5h1M161 311.5h1M159 311.5h1M157 311.5h1M155 311.5h1M153 310.5h1M151 310.5h1M149 310.5h1" stroke="#ff0000" stroke-linecap="butt" shape-rendering="crispEdges"/>
<path d="M324 162.5h1M321 165.5h1M318 167.5h1M315 170.5h1M312 172.5h1M309 175.5h1M306 177.5h1M303 180.5h1M300 182.5h1M297 185.5h1M294 187.5h1M291 190.5h1M288 192.5h1M285 195.5h1M282 198.5h1M279 200.5h1M276 203.5h1M273 205.5h1M270 208.5h1M267 210.5h1M264 213.5h1M261 215.5h1M258 218.5h1M255 220.5h1M252 223.5h1M249 225.5h1M246 228.5h1M243 231.5h1M240 233.5h1M237 236.5h1M234 238.5h1M231 241.5h1M228 243.5h1M225 246.5h1M222 248.5h1M219 251.5h1M216 253.5h1M213 256.5h1M210 258.5h1M207 261.5h1M204 263.5h1M201 266.5h1M198 269.5h1M195 271.5h1M192 274.5h1M189 276.5h1M186 279.5h1M183 281.5h1M180 284.5h1M177 286.5h1M174 289.5h1M171 291.5h1M168 294.5h1M165 296.5h1M162 299.5h1M159 302.5h1M156 304.5h1M153 307.5h1M150 309.5h1" stroke="#0000ff" stroke-linecap="butt" shape-rendering="crispEdges"/>
<path d="M145 305.5h1M147 307.5h1M148 309.5h1" stroke="#ffff00" stroke-linecap="butt" shape-rendering="crispEdges"/>
<path d="M315.5 316v10M316.5 298v18M317.5 280v18M318.5 262v18M319.5 244v18M320.5 226v18M321.5 208v18M322.5 190v18M323.5 172v18M324.5 162v10" stroke="#ff0000" stroke-linecap="butt" shape-rendering="crispEdges"/>
<path d="M145 305.5h1M149 305.5h1M153 306.5h1M157 306.5h1M161 307.5h1M165 307.5h1M169 308.5h1M173 308.5h1M177 309.5h1M181 309.5h1M185 310.5h1M189 310.5h1M193 311.5h1M197 311.5h1M201 312.5h1M205 312.5h1M209 313.5h1M213 313.5h1M217 313.5h1M221 314.5h1M225 314.5h1M229 315.5h1M233 315.5h1M237 316.5h1M241 316.5h1M245 317.5h1M249 317.5h1M253 318.5h1M257 318.5h1M261 319.5h1M265 319.5h1M269 320.5h1M273 320.5h1M277 321.5h1M281 321.5h1M285 321.5h1M289 322.5h1M293 322.5h1M297 323.5h1M301 323.5h1M305 324.5h1M309 324.5h1M313 325.5h1" stroke="#ff0000" stroke-linecap="butt" shape-rendering="crispEdges"/>
<path d="M145 305.5h1M149 306.5h1M153 307.5h1M157 308.5h1M161 309.5h1M165 310.5h1M169 310.5h1M173 311.5h1M177 312.5h1M181 313.5h1M185 314.5h1M189 315.5h1M193 316.5h1M197 317.5h1M201 318.5h1M205 319.5h1M209 320.5h1M213 320.5h1M217 321.5h1M221 322.5h1M225 323.5h1M229 324.5h1M233 325.5h1M237 326.5h1M241 327.5h1M245 328.5h1M249 329.5h1M253 329.5h1M257 330.5h1M261 331.5h1M265 332.5h1M269 333.5h1M273 334.5h1M277 335.5h1M281 336.5h1M285 337.5h1M289 338.5h1M293 339.5h1" stroke="#ff0000" stroke-linecap="butt" shape-rendering="crispEdges"/>
<path d="M303 144.5h1M303 146.5h1M303 148.5h1M303 150.5h1M303 152.5h1M303 154.5h1M303 156.5h1M302 158.5h1M302 160.5h1M302 162.5h1M302 164.5h1M302 166.5h1M302 168.5h1M302 170.5h1M302 172.5h1M302 174.5h1M302 176.5h1M302 178.5h1M302 180.5h1M301 182.5h1M301 184.5h1M301 186.5h1M301 188.5h1M301 190.5h1M301 192.5h1M301 194.5h1M301 196.5h1M301 198.5h1M301 200.5h1M301 202.5h1M301 204.5h1M300 206.5h1M300 208.5h1M300 210.5h1M300 212.5h1M300 214.5h1M300 216.5h1M300 218.5h1M300 220.5h1M300 222.5h1M300 224.5h1M300 226.5h1M300 228.5h1M299 230.5h1M299 232.5h1M299 234.5h1M299 236.5h1M299 238.5h1M299 240.5h1M299 242.5h1M299 244.5h1M299 246.5h1M299 248.5h1M299 250.5h1M299 252.5h1M298 254.5h1M298 256.5h1M298 258.5h1M298 260.5h1M298 262.5h1M298 264.5h1M298 266.5h1M298 268.5h1M298 270.5h1M298 272.5h1M298 274.5h1M298 276.5h1M298 278.5h1M297 280.5h1M297 282.5h1M297 284.5h1M297 286.5h1M297 288.5h1M297 290.5h1M297 292.5h1M297 294.5h1M297 296.5h1M297 298.5h1M297 300.5h1M297 302.5h1M296 304.5h1M296 306.5h1M296 308.5h1M296 310.5h1M296 312.5h1M296 314.5h1M296 316.5h1M296 318.5h1M296 320.5h1M296 322.5h1M296 324.5h1M296 326.5h1M295 328.5h1M295 330.5h1M295 332.5h1M295 334.5h1M295 336.5h1M295 338.5h1" stroke="#00ff00" stroke-linecap="butt" shape-rendering="crispEdges"/>
<path d="M308 153.5h8M293 154.5h15M278 155.5h15M264 156.5h14M249 157.5h15M234 158.5h15M219 159.5h15M204 160.5h15M190 161.5h14M175 162.5h15M160 163.5h15M152 164.5h8" stroke="#ff0000" stroke-linecap="butt" shape-rendering="crispEdges"/>
<path d="M303 144.5h1M299 145.5h1M295 145.5h1M291 146.5h1M287 146.5h1M283 147.5h1M279 147.5h1M275 148.5h1M271 148.5h1M267 149.5h1M263 149.5h1M259 150.5h1M255 150.5h1M251 151.5h1M247 151.5h1M243 152.5h1M239 152.5h1M235 153.5h1M231 154.5h1M227 154.5h1M223 155.5h1M219 155.5h1M215 156.5h1M211 156.5h1M207 157.5h1M203 157.5h1M199 158.5h1M195 158.5h1M191 159.5h1M187 159.5h1M183 160.5h1M179 160.5h1M175 161.5h1M171 161.5h1M167 162.5h1M163 163.5h1M159 163.5h1M155 164.5h1" stroke="#ff0000" stroke-linecap="butt" shape-rendering="crispEdges"/>
<path d="M324 162.5h1M320 158.5h1M316 154.5h1" stroke="#ffff00" stroke-linecap="butt" shape-rendering="crispEdges"/>
<path d="M303 144.5h1M307 147.5h1M311 150.5h1M315 153.5h1" stroke="#ffff00" stroke-linecap="butt" shape-rendering="crispEdges"/>
<path d="M145 305.5h1M149 302.5h1M153 299.5h1M157 295.5h1M161 292.5h1M165 289.5h1M169 286.5h1M173 283.5h1M177 279.5h1M181 276.5h1M185 273.5h1M189 270.5h1M193 267.5h1M197 263.5h1M201 260.5h1M205 257.5h1M209 254.5h1M213 251.5h1M217 247.5h1M221 244.5h1M225 241.5h1M229 238.5h1M233 235.5h1M237 232.5h1M241 228.5h1M245 225.5h1M249 222.5h1M253 219.5h1M257 216.5h1M261 212.5h1M265 209.5h1M269 206.5h1M273 203.5h1M277 200.5h1M281 196.5h1M285 193.5h1M289 190.5h1M293 187.5h1M297 184.5h1M301 180.5h1M305 177.5h1M309 174.5h1M313 171.5h1M317 168.5h1M321 164.5h1" stroke="#0000ff" stroke-linecap="butt" shape-rendering="crispEdges"/>
<path d="M211.5 108v3M212.5 111v5M213.5 116v3" stroke="#ffffff" stroke-linecap="butt" shape-rendering="crispEdges"/>
<text transform="translate(201,108) scale(0.4605,1)" fill="#ffff00" stroke="#ffff00" stroke-width="0.4" style="font-family:'Liberation Sans',sans-serif;font-size:23.74px;font-weight:normal">MC</text>
<path d="M213 122.5h3M214.5 121v3" stroke="#ffff00" stroke-linecap="butt"/>
<path d="M105 239.5h11" stroke="#ffffff" stroke-linecap="butt" shape-rendering="crispEdges"/>
<text transform="translate(87,248) scale(0.4295,1)" fill="#ff0000" stroke="#ff0000" stroke-width="0.4" style="font-family:'Liberation Sans',sans-serif;font-size:23.74px;font-weight:normal">Asc</text>
<path d="M118 239.5h3M119.5 238v3" stroke="#ff0000" stroke-linecap="butt"/>
<path d="M348 163.5h2M344 164.5h4M341 165.5h3M339 166.5h2" stroke="#808080" stroke-linecap="butt" shape-rendering="crispEdges"/>
<path d="M356 150.5h5M352 162.5h3M362 162.5h3M350.5 164v1M351.5 163v1M351.5 165v1M352.5 154v5M352.5 166v1M353.5 153v1M353.5 159v1M353.5 163v1M353.5 165v1M354.5 152v1M354.5 160v2M354.5 164v1M355.5 151v1M361.5 151v1M362.5 152v1M362.5 160v2M362.5 164v1M363.5 153v1M363.5 159v1M363.5 163v1M363.5 165v1M364.5 154v5M364.5 166v1M365.5 163v1M365.5 165v1M366.5 164v1" stroke="#008080" fill="none" stroke-linecap="butt" shape-rendering="crispEdges"/>
<path d="M335 169.5h3M336.5 168v3" stroke="#008080" stroke-linecap="butt"/>
<path d="M122 177.5h2M125 179.5h2M127 180.5h2M121.5 176v1M124.5 178v1M129.5 181v1" stroke="#ffffff" stroke-linecap="butt" shape-rendering="crispEdges"/>
<path d="M106 164.5h11M106 172.5h11M106 180.5h11M106.5 165v7M106.5 173v7M117.5 165v1M117.5 171v1M118.5 166v5" stroke="#00ffff" fill="none" stroke-linecap="butt" shape-rendering="crispEdges"/>
<path d="M133 183.5h3M134.5 182v3" stroke="#00ffff" stroke-linecap="butt"/>
<path d="M126 294.5h3M121 295.5h5M118 296.5h3" stroke="#808080" stroke-linecap="butt" shape-rendering="crispEdges"/>
<path d="M102 294.5h3M107 294.5h5M114 294.5h3M107 300.5h5M105 304.5h9M103.5 292v2M103.5 295v2M104.5 297v1M105.5 298v1M106.5 299v1M109.5 292v2M109.5 295v5M109.5 301v3M109.5 305v4M112.5 299v1M113.5 298v1M114.5 297v1M115.5 292v2M115.5 295v2" stroke="#00ffff" fill="none" stroke-linecap="butt" shape-rendering="crispEdges"/>
<path d="M131 292.5h3M132.5 291v3" stroke="#00ffff" stroke-linecap="butt"/>
<path d="M137.5 325v1M138.5 323v2M139.5 321v2M140.5 319v2M141.5 317v2M142.5 316v1" stroke="#808080" stroke-linecap="butt" shape-rendering="crispEdges"/>
<path d="M128 325.5h3M127 332.5h5M127 340.5h5M125.5 328v1M125.5 334v5M126.5 327v1M126.5 333v1M126.5 339v1M127.5 326v1M129.5 324v1M129.5 326v6M129.5 336v1M131.5 326v1M132.5 327v1M132.5 333v1M132.5 339v1M133.5 328v1M133.5 334v5" stroke="#00ff00" fill="none" stroke-linecap="butt" shape-rendering="crispEdges"/>
<path d="M144 313.5h3M145.5 312v3" stroke="#00ff00" stroke-linecap="butt"/>
<path d="M321.5 332v1M322.5 333v1M323.5 334v1M324.5 335v1M325.5 336v1M326.5 337v1M327.5 338v1M328.5 339v1" stroke="#ffffff" stroke-linecap="butt" shape-rendering="crispEdges"/>
<path d="M328 341.5h9M336 345.5h3M332 347.5h3M332.5 339v2M332.5 342v5M332.5 348v6M335.5 346v1M338.5 351v3M339.5 346v1M339.5 350v1M339.5 354v1M340.5 347v3M340.5 355v1" stroke="#ffff00" fill="none" stroke-linecap="butt" shape-rendering="crispEdges"/>
<path d="M317 329.5h3M318.5 328v3" stroke="#ffff00" stroke-linecap="butt"/>
<path d="M300.5 347v2M301.5 349v2M302.5 351v2M303.5 353v2M304.5 355v2" stroke="#808080" stroke-linecap="butt" shape-rendering="crispEdges"/>
<path d="M304 358.5h2M303 370.5h15M303.5 369v1M304.5 367v2M305.5 365v2M306.5 359v1M306.5 363v2M307.5 360v3M313.5 358v12M313.5 371v2M314.5 357v1M315.5 356v1" stroke="#ff0000" fill="none" stroke-linecap="butt" shape-rendering="crispEdges"/>
<path d="M296 343.5h3M297.5 342v3" stroke="#ff0000" stroke-linecap="butt"/>
<path d="M141 154.5h2M138.5 151v1M139.5 152v1M140.5 153v1M143.5 155v1M144.5 156v1M145.5 157v1" stroke="#ffffff" stroke-linecap="butt" shape-rendering="crispEdges"/>
<path d="M134 137.5h6M138 138.5h2M126 143.5h5M131 144.5h2M126 153.5h5M123.5 146v5M124.5 145v1M124.5 151v1M125.5 144v1M125.5 152v1M131.5 152v1M132.5 145v1M132.5 151v1M133.5 143v1M133.5 146v5M134.5 142v1M135.5 141v1M136.5 140v1M137.5 139v1M139.5 139v4" stroke="#ff0000" fill="none" stroke-linecap="butt" shape-rendering="crispEdges"/>
<path d="M148 161.5h3M149.5 160v3" stroke="#ff0000" stroke-linecap="butt"/>
<path d="M322.5 145v2M323.5 143v2M324.5 141v2M325.5 139v2M326.5 137v2" stroke="#808080" stroke-linecap="butt" shape-rendering="crispEdges"/>
<path d="M330 122.5h5M330 130.5h5M328 134.5h9M328.5 124v5M329.5 123v1M329.5 129v1M332.5 131v3M332.5 135v4M335.5 123v1M335.5 129v1M336.5 124v5" stroke="#ffff00" fill="none" stroke-linecap="butt" shape-rendering="crispEdges"/>
<path d="M317 150.5h3M318.5 149v3" stroke="#ffff00" stroke-linecap="butt"/>
<path d="M337 151.5h2M333 154.5h2M331.5 156v1M332.5 155v1M335.5 153v1M336.5 152v1M339.5 150v1" stroke="#ffffff" stroke-linecap="butt" shape-rendering="crispEdges"/>
<path d="M344 137.5h5M344 145.5h5M342 149.5h9M342.5 135v1M342.5 139v5M343.5 136v1M343.5 138v1M343.5 144v1M346.5 146v3M346.5 150v2M349.5 136v1M349.5 138v1M349.5 144v1M350.5 135v1M350.5 139v5" stroke="#00ff00" fill="none" stroke-linecap="butt" shape-rendering="crispEdges"/>
<path d="M327 159.5h3M328.5 158v3" stroke="#00ff00" stroke-linecap="butt"/>
<path d="M126 311.5h13" stroke="#ffffff" stroke-linecap="butt" shape-rendering="crispEdges"/>
<path d="M114 308.5h5M119 309.5h2M119 323.5h2M114 324.5h5M112.5 310v1M112.5 322v1M113.5 309v1M113.5 311v1M113.5 321v1M113.5 323v1M114.5 312v1M114.5 320v1M115.5 313v1M115.5 319v1M116.5 314v5M121.5 310v1M121.5 322v1M122.5 311v1M122.5 321v1M123.5 312v1M123.5 320v1M124.5 313v7" stroke="#00ffff" fill="none" stroke-linecap="butt" shape-rendering="crispEdges"/>
<path d="M141 308.5h3M142.5 307v3" stroke="#00ffff" stroke-linecap="butt"/>
<path d="M309.5 135v2M310.5 132v3M311.5 129v3M312.5 127v2" stroke="#ffffff" stroke-linecap="butt" shape-rendering="crispEdges"/>
<path d="M315 111.5h5M313 112.5h2M320 112.5h2M311 113.5h2M322 113.5h2M311 125.5h2M322 125.5h2M313 126.5h2M320 126.5h2M315 127.5h5M309.5 117v5M310.5 115v2M310.5 122v2M311.5 114v1M311.5 124v1M317.5 119v1M323.5 114v1M323.5 124v1M324.5 115v2M324.5 122v2M325.5 117v5" stroke="#ff0000" fill="none" stroke-linecap="butt" shape-rendering="crispEdges"/>
<path d="M305 140.5h3M306.5 139v3" stroke="#ff0000" stroke-linecap="butt"/>
</g>
<g class="s">
<text x="486" y="14" fill="#ffffff" stroke="#ffffff" xml:space="preserve">Astrolog 5.41F</text>
<text transform="translate(486.1,24) scale(1.25,1)" fill="#c0c0c0" stroke="#c0c0c0" style="font-size:7.6px">Ñ</text>
<text transform="translate(492.1,24) scale(1.25,1)" fill="#c0c0c0" stroke="#c0c0c0" style="font-size:7.6px">Ú</text>
<text transform="translate(498.1,24) scale(1.25,1)" fill="#c0c0c0" stroke="#c0c0c0" style="font-size:7.6px">Ñ</text>
<text transform="translate(504.1,24) scale(1.25,1)" fill="#c0c0c0" stroke="#c0c0c0" style="font-size:7.6px">Ù</text>
<text x="516" y="24" fill="#c0c0c0" stroke="#c0c0c0" xml:space="preserve">¶</text>
<text x="486" y="34" fill="#c0c0c0" stroke="#c0c0c0" xml:space="preserve">Wed 25 August 1999</text>
<text x="486" y="44" fill="#c0c0c0" stroke="#c0c0c0" xml:space="preserve">14:53 (ST +8:00 GMT)</text>
<text transform="translate(498.1,54) scale(1.25,1)" fill="#c0c0c0" stroke="#c0c0c0" style="font-size:7.6px">Â</text>
<text transform="translate(510.1,54) scale(1.25,1)" fill="#c0c0c0" stroke="#c0c0c0" style="font-size:7.6px">Ñ</text>
<text x="486" y="64" fill="#c0c0c0" stroke="#c0c0c0" xml:space="preserve">120°17E 22°38N</text>
<text x="486" y="74" fill="#c0c0c0" stroke="#c0c0c0" xml:space="preserve">Placidus houses.</text>
<text x="486" y="84" fill="#c0c0c0" stroke="#c0c0c0" xml:space="preserve">Tropical, Geocentric.</text>
<text x="486" y="94" fill="#c0c0c0" stroke="#c0c0c0" xml:space="preserve">Julian Day = 2451415.7868</text>
<text x="486" y="114" fill="#ff0000" stroke="#ff0000" xml:space="preserve"> 1st house: </text>
<text x="558" y="114" fill="#ffff00" stroke="#ffff00" xml:space="preserve"> 5Cap46</text>
<text x="486" y="124" fill="#ffff00" stroke="#ffff00" xml:space="preserve"> 2nd house: </text>
<text x="558" y="124" fill="#00ff00" stroke="#00ff00" xml:space="preserve"> 9Aqu01</text>
<text x="486" y="134" fill="#00ff00" stroke="#00ff00" xml:space="preserve"> 3rd house: </text>
<text x="558" y="134" fill="#00ffff" stroke="#00ffff" xml:space="preserve">14Pis34</text>
<text x="486" y="144" fill="#00ffff" stroke="#00ffff" xml:space="preserve"> 4th house: </text>
<text x="558" y="144" fill="#ff0000" stroke="#ff0000" xml:space="preserve">18Ari02</text>
<text x="486" y="154" fill="#ff0000" stroke="#ff0000" xml:space="preserve"> 5th house: </text>
<text x="558" y="154" fill="#ffff00" stroke="#ffff00" xml:space="preserve">16Tau41</text>
<text x="486" y="164" fill="#ffff00" stroke="#ffff00" xml:space="preserve"> 6th house: </text>
<text x="558" y="164" fill="#00ff00" stroke="#00ff00" xml:space="preserve">11Gem38</text>
<text x="486" y="174" fill="#00ff00" stroke="#00ff00" xml:space="preserve"> 7th house: </text>
<text x="558" y="174" fill="#00ffff" stroke="#00ffff" xml:space="preserve"> 5Can46</text>
<text x="486" y="184" fill="#00ffff" stroke="#00ffff" xml:space="preserve"> 8th house: </text>
<text x="558" y="184" fill="#ff0000" stroke="#ff0000" xml:space="preserve"> 9Leo01</text>
<text x="486" y="194" fill="#ff0000" stroke="#ff0000" xml:space="preserve"> 9th house: </text>
<text x="558" y="194" fill="#ffff00" stroke="#ffff00" xml:space="preserve">14Vir34</text>
<text x="486" y="204" fill="#ffff00" stroke="#ffff00" xml:space="preserve">10th house: </text>
<text x="558" y="204" fill="#00ff00" stroke="#00ff00" xml:space="preserve">18Lib02</text>
<text x="486" y="214" fill="#00ff00" stroke="#00ff00" xml:space="preserve">11th house: </text>
<text x="558" y="214" fill="#00ffff" stroke="#00ffff" xml:space="preserve">16Sco41</text>
<text x="486" y="224" fill="#00ffff" stroke="#00ffff" xml:space="preserve">12th house: </text>
<text x="558" y="224" fill="#ff0000" stroke="#ff0000" xml:space="preserve">11Sag38</text>
<text x="486" y="244" fill="#ff0000" stroke="#ff0000" xml:space="preserve"> Sun: </text>
<text x="522" y="244" fill="#ffff00" stroke="#ffff00" xml:space="preserve"> 1Vir39</text>
<text x="576" y="244" fill="#c0c0c0" stroke="#c0c0c0" xml:space="preserve">+ 0°00'</text>
<text x="486" y="254" fill="#00ffff" stroke="#00ffff" xml:space="preserve">Moon: </text>
<text x="522" y="254" fill="#00ff00" stroke="#00ff00" xml:space="preserve">11Aqu06</text>
<text x="576" y="254" fill="#c0c0c0" stroke="#c0c0c0" xml:space="preserve">+ 0°10'</text>
<text x="486" y="264" fill="#00ff00" stroke="#00ff00" xml:space="preserve">Merc: </text>
<text x="522" y="264" fill="#ff0000" stroke="#ff0000" xml:space="preserve">17Leo54</text>
<text x="576" y="264" fill="#c0c0c0" stroke="#c0c0c0" xml:space="preserve">+ 1°08'</text>
<text x="486" y="274" fill="#ffff00" stroke="#ffff00" xml:space="preserve">Venu: </text>
<text x="522" y="274" fill="#ff0000" stroke="#ff0000" xml:space="preserve">24Leo07</text>
<text x="564" y="274" fill="#ffffff" stroke="#ffffff" xml:space="preserve">R</text>
<text x="576" y="274" fill="#c0c0c0" stroke="#c0c0c0" xml:space="preserve">− 8°20'</text>
<text x="486" y="284" fill="#ff0000" stroke="#ff0000" xml:space="preserve">Mars: </text>
<text x="522" y="284" fill="#00ffff" stroke="#00ffff" xml:space="preserve">24Sco47</text>
<text x="576" y="284" fill="#c0c0c0" stroke="#c0c0c0" xml:space="preserve">− 1°46'</text>
<text x="486" y="294" fill="#ff0000" stroke="#ff0000" xml:space="preserve">Jupi: </text>
<text x="522" y="294" fill="#ffff00" stroke="#ffff00" xml:space="preserve"> 4Tau59</text>
<text x="564" y="294" fill="#ffffff" stroke="#ffffff" xml:space="preserve">R</text>
<text x="576" y="294" fill="#c0c0c0" stroke="#c0c0c0" xml:space="preserve">− 1°25'</text>
<text x="486" y="304" fill="#ffff00" stroke="#ffff00" xml:space="preserve">Satu: </text>
<text x="522" y="304" fill="#ffff00" stroke="#ffff00" xml:space="preserve">17Tau10</text>
<text x="576" y="304" fill="#c0c0c0" stroke="#c0c0c0" xml:space="preserve">− 2°27'</text>
<text x="486" y="314" fill="#00ff00" stroke="#00ff00" xml:space="preserve">Uran: </text>
<text x="522" y="314" fill="#00ff00" stroke="#00ff00" xml:space="preserve">14Aqu08</text>
<text x="564" y="314" fill="#ffffff" stroke="#ffffff" xml:space="preserve">R</text>
<text x="576" y="314" fill="#c0c0c0" stroke="#c0c0c0" xml:space="preserve">− 0°43'</text>
<text x="486" y="324" fill="#00ffff" stroke="#00ffff" xml:space="preserve">Nept: </text>
<text x="522" y="324" fill="#00ff00" stroke="#00ff00" xml:space="preserve"> 2Aqu13</text>
<text x="564" y="324" fill="#ffffff" stroke="#ffffff" xml:space="preserve">R</text>
<text x="576" y="324" fill="#c0c0c0" stroke="#c0c0c0" xml:space="preserve">+ 0°16'</text>
<text x="486" y="334" fill="#00ffff" stroke="#00ffff" xml:space="preserve">Plut: </text>
<text x="522" y="334" fill="#ff0000" stroke="#ff0000" xml:space="preserve"> 7Sag45</text>
<text x="576" y="334" fill="#c0c0c0" stroke="#c0c0c0" xml:space="preserve">+11°24'</text>
<text x="486" y="344" fill="#008080" stroke="#008080" xml:space="preserve">Node: </text>
<text x="522" y="344" fill="#ff0000" stroke="#ff0000" xml:space="preserve">11Leo53</text>
<text x="564" y="344" fill="#ffffff" stroke="#ffffff" xml:space="preserve">R</text>
<text x="576" y="344" fill="#c0c0c0" stroke="#c0c0c0" xml:space="preserve">+ 0°00'</text>
<text x="486" y="354" fill="#ff0000" stroke="#ff0000" xml:space="preserve">Asce: </text>
<text x="522" y="354" fill="#ffff00" stroke="#ffff00" xml:space="preserve"> 5Cap46</text>
<text transform="translate(624,355) scale(0.3904,1)" fill="#ff0000" stroke="#ff0000" stroke-width="0.7" style="font-family:'Liberation Sans',sans-serif;font-size:12.57px;font-weight:bold">Asc</text>
<text x="486" y="364" fill="#ffff00" stroke="#ffff00" xml:space="preserve">Midh: </text>
<text x="522" y="364" fill="#00ff00" stroke="#00ff00" xml:space="preserve">18Lib02</text>
<text transform="translate(624,365) scale(0.4605,1)" fill="#ffff00" stroke="#ffff00" stroke-width="0.7" style="font-family:'Liberation Sans',sans-serif;font-size:12.57px;font-weight:bold">MC</text>
<text x="486" y="384" fill="#c0c0c0" stroke="#c0c0c0" xml:space="preserve">Fire: 4, Earth: 4,</text>
<text x="486" y="394" fill="#c0c0c0" stroke="#c0c0c0" xml:space="preserve">Air : 4, Water: 1</text>
<text x="486" y="404" fill="#c0c0c0" stroke="#c0c0c0" xml:space="preserve">Car: 2, Fix: 9, Mut: 2</text>
<text x="486" y="414" fill="#c0c0c0" stroke="#c0c0c0" xml:space="preserve">Yang: 8, Yin: 5</text>
<text x="486" y="424" fill="#c0c0c0" stroke="#c0c0c0" xml:space="preserve">M: 6, N: 5, A: 5, D: 6</text>
<text x="486" y="434" fill="#c0c0c0" stroke="#c0c0c0" xml:space="preserve">Ang: 2, Suc: 9, Cad: 0</text>
<text x="486" y="444" fill="#c0c0c0" stroke="#c0c0c0" xml:space="preserve">Learn: 6, Share: 7</text>
</g>
<g fill="none" stroke-width="1" stroke-linecap="butt" shape-rendering="crispEdges">
<path d="M624 106.5h2M629 106.5h4M626 107.5h3M628 110.5h4M629 114.5h3M625.5 114v1M626.5 112v2M627.5 111v1M628.5 112v2M629.5 109v1M629.5 111v1M630.5 108v1M631.5 107v1M632.5 111v3" stroke="#ff0000"/>
<path d="M625 117.5h2M628 117.5h2M627 118.5h2M630 118.5h2M625 122.5h2M628 122.5h2M627 123.5h2M630 123.5h2M624.5 119v1M624.5 124v1M625.5 118v1M625.5 123v1M626.5 116v1M626.5 121v1M627.5 119v1M627.5 124v1M629.5 116v1M629.5 121v1M630.5 119v1M630.5 124v1M631.5 117v1M631.5 122v1M632.5 116v1M632.5 121v1" stroke="#ffff00"/>
<path d="M624 130.5h9M624.5 126v1M624.5 134v1M625.5 127v1M625.5 133v1M626.5 128v2M626.5 131v2M630.5 128v2M630.5 131v2M631.5 127v1M631.5 133v1M632.5 126v1M632.5 134v1" stroke="#00ff00"/>
<path d="M625 136.5h2M630 136.5h2M624.5 137v2M625.5 139v1M627.5 137v3M628.5 140v5M629.5 137v3M631.5 139v1M632.5 137v2" stroke="#00ffff"/>
<path d="M627 148.5h3M627 154.5h3M625.5 146v1M625.5 150v3M626.5 147v1M626.5 149v1M626.5 153v1M630.5 147v1M630.5 149v1M630.5 153v1M631.5 146v1M631.5 150v3" stroke="#ff0000"/>
<path d="M626 157.5h6M626 163.5h6M625.5 156v1M625.5 164v1M627.5 158v5M630.5 158v5M632.5 156v1M632.5 164v1" stroke="#ffff00"/>
<path d="M627 167.5h3M625 168.5h2M630 168.5h2M625 170.5h2M630 171.5h2M625 173.5h2M630 173.5h2M627 174.5h3M624.5 169v1M624.5 171v2M627.5 171v2M629.5 169v2M632.5 169v2M632.5 172v1" stroke="#00ff00"/>
<path d="M627 176.5h3M624.5 182v1M625.5 178v3M625.5 183v1M626.5 177v1M626.5 181v2M630.5 177v1M630.5 181v2M631.5 178v3M631.5 183v1M632.5 184v1" stroke="#00ffff"/>
<path d="M629 188.5h3M624.5 186v1M625.5 187v7M626.5 186v1M627.5 187v7M628.5 186v1M629.5 187v1M629.5 189v4M629.5 194v1M630.5 193v1M631.5 187v1M631.5 189v4M631.5 194v1" stroke="#ff0000"/>
<path d="M627 198.5h3M624 201.5h4M629 201.5h4M624 203.5h9M626.5 199v2M630.5 199v2" stroke="#ffff00"/>
<path d="M630 214.5h2M624.5 206v1M625.5 207v7M626.5 206v1M627.5 207v7M628.5 206v1M629.5 207v7M632.5 212v2" stroke="#00ff00"/>
<path d="M630 216.5h3M631 217.5h2M624.5 224v1M625.5 219v1M625.5 223v1M626.5 220v1M626.5 222v1M627.5 221v1M628.5 220v1M628.5 222v1M629.5 219v1M629.5 223v1M630.5 218v1M632.5 218v1" stroke="#00ffff"/>
<path d="M627 236.5h3M625 237.5h2M630 237.5h2M625 243.5h2M630 243.5h2M627 244.5h3M624.5 239v3M625.5 238v1M625.5 242v1M628.5 240v1M631.5 238v1M631.5 242v1M632.5 239v3" stroke="#ff0000"/>
<path d="M626 246.5h3M629 247.5h2M629 253.5h2M626 254.5h3M625.5 247v1M625.5 253v1M626.5 248v1M626.5 252v1M627.5 249v3M630.5 248v1M630.5 252v1M631.5 249v3" stroke="#00ffff"/>
<path d="M627 257.5h3M627 261.5h3M626 263.5h5M626.5 256v1M626.5 258v3M628.5 262v1M628.5 264v1M630.5 256v1M630.5 258v3" stroke="#00ff00"/>
<path d="M627 266.5h3M627 270.5h3M626 272.5h5M626.5 267v3M628.5 271v1M628.5 273v2M630.5 267v3" stroke="#ffff00"/>
<path d="M630 276.5h3M631 277.5h2M626 279.5h2M626 284.5h2M624.5 281v2M625.5 280v1M625.5 283v1M628.5 280v1M628.5 283v1M629.5 279v1M629.5 281v2M630.5 278v1M632.5 278v1" stroke="#ff0000"/>
<path d="M625 287.5h2M625 293.5h8M625.5 292v1M626.5 290v2M627.5 288v2M630.5 287v6M630.5 294v1M631.5 286v1" stroke="#ff0000"/>
<path d="M625 297.5h5M629 299.5h2M627 300.5h2M627.5 296v1M627.5 298v2M627.5 301v3M630.5 302v2M631.5 300v2M631.5 304v1" stroke="#ffff00"/>
<path d="M627 307.5h3M627 310.5h3M627 314.5h3M626.5 308v1M626.5 311v3M628.5 306v1M628.5 308v2M628.5 312v1M630.5 308v1M630.5 311v3" stroke="#00ff00"/>
<path d="M624 317.5h2M627 317.5h3M631 317.5h2M627 320.5h3M626 322.5h5M625.5 316v1M625.5 318v1M626.5 319v1M628.5 316v1M628.5 318v2M628.5 321v1M628.5 323v2M630.5 319v1M631.5 316v1M631.5 318v1" stroke="#00ffff"/>
<path d="M625 326.5h6M625 330.5h6M625 334.5h6M625.5 327v3M625.5 331v3M631.5 327v3" stroke="#00ffff"/>
<path d="M627 336.5h3M625 342.5h2M630 342.5h2M624.5 343v1M625.5 338v3M625.5 344v1M626.5 337v1M626.5 341v1M626.5 343v1M630.5 337v1M630.5 341v1M630.5 343v1M631.5 338v3M631.5 344v1M632.5 343v1" stroke="#008080"/>
</g>
</svg>
</body></html>
